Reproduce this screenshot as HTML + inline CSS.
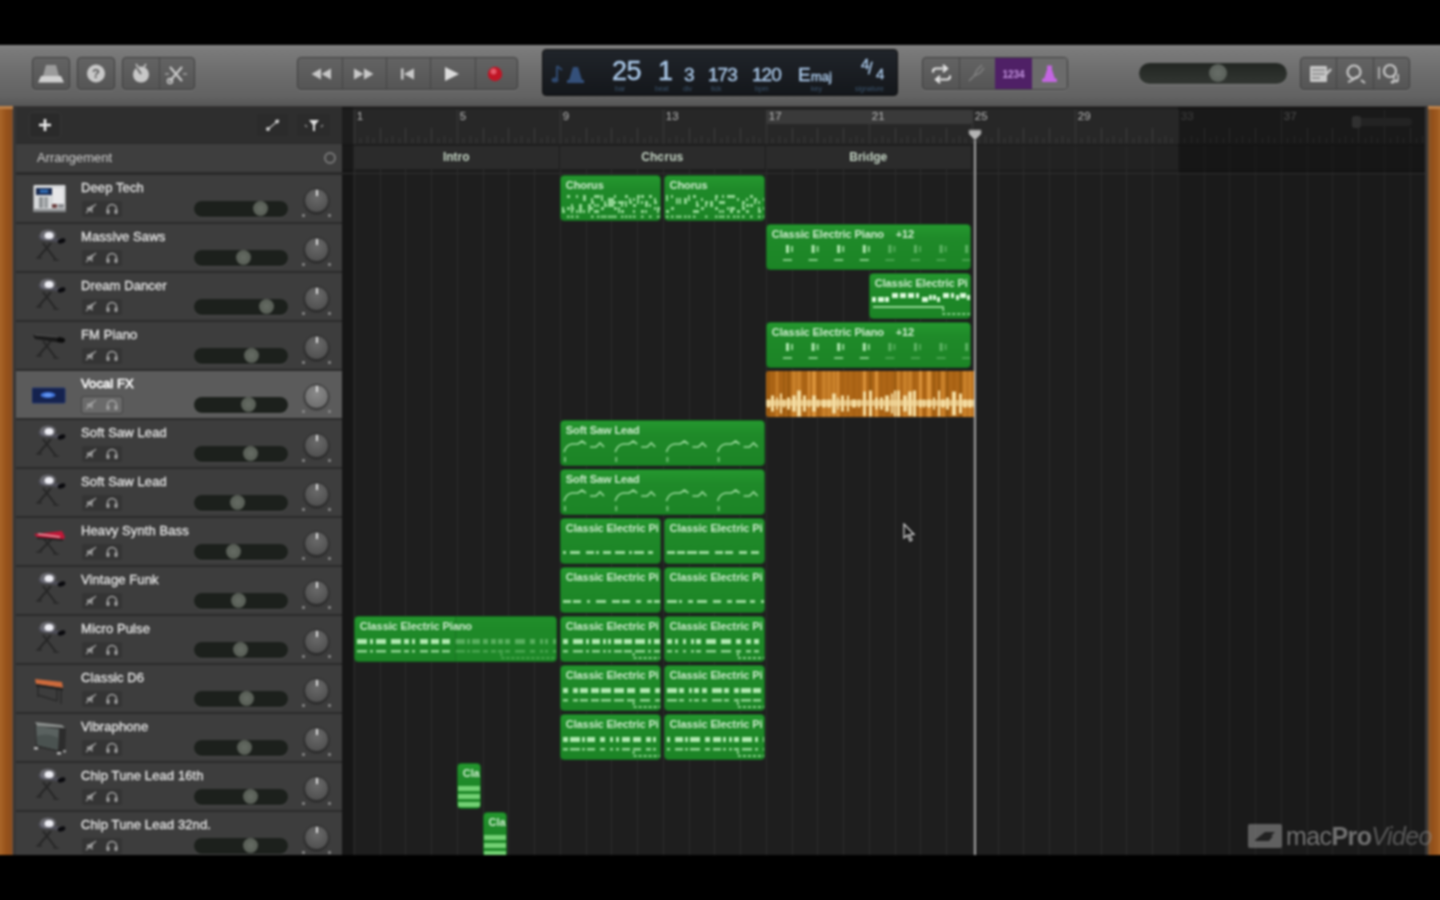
<!DOCTYPE html><html><head><meta charset="utf-8"><title>GarageBand</title><style>
*{box-sizing:border-box;margin:0;padding:0}
html,body{width:1440px;height:900px;overflow:hidden;background:#000}
body{font-family:"Liberation Sans",sans-serif;position:relative;color:#ddd}
#app{position:absolute;left:0;top:0;width:1440px;height:900px;overflow:hidden}#in{position:absolute;left:0;top:0;width:1440px;height:900px;filter:blur(0.9px)}
.abs{position:absolute}
#toolbar{left:-10px;top:45px;width:1460px;height:62px;background:linear-gradient(#8a8a8a,#7c7c7c 4%,#6f6f6f 40%,#626262 85%,#565656);border-bottom:1px solid #222}
.btn{position:absolute;top:12px;height:33px;border-radius:4px;background:linear-gradient(#636363,#555);border:1px solid #3e3e3e;box-shadow:0 1px 0 rgba(255,255,255,.12)}
.btn .dv{position:absolute;top:0;bottom:0;width:1px;background:#444}
.btn svg{position:absolute;top:0}
#lcd{left:552px;top:4px;width:356px;height:47px;border-radius:4px;background:linear-gradient(#20242a,#14171b);border:1px solid #101010;color:#aac8e8}
#lcd span{position:absolute;white-space:nowrap;-webkit-text-stroke:.4px #aac8e8}
#lcd .l{font-size:7px;color:#3d5670;top:35px;-webkit-text-stroke:0}
.wood{background:linear-gradient(90deg,#a86428,#a86428 44%,#97521a 70%,#8c4e1e 92%,#75533a)}.wood i{position:absolute;left:0;top:0;right:0;height:3px;background:#bc8048}
#hdr{left:16px;top:107px;width:326px;height:748px;background:#2a2a2a;overflow:hidden}
#hdrtop{left:0;top:0;width:326px;height:36px;background:#2e2e2e}
#arrh{left:0;top:37px;width:326px;height:28px;background:#3e3e3e;font-size:13px;color:#d0d0d0}
.trk{position:absolute;left:0;width:326px;height:47px;background:#3d3d3d}
.trk.sel{background:#5b5b5b}
.trk .nm{position:absolute;left:65px;top:5px;font-size:13px;color:#e2e2e2;white-space:nowrap;letter-spacing:.1px;-webkit-text-stroke:.35px #e2e2e2}.trk.sel .nm{color:#fff;-webkit-text-stroke:.6px #fff}
.trk .ms{position:absolute;left:66px;top:26px;width:40px;height:16px;background:#343434;border-radius:2px}
.trk.sel .ms{background:#6a6a6a;box-shadow:0 0 0 1px #444}
.trk .sl{position:absolute;left:178px;top:26px;width:94px;height:16px;border-radius:8px;background:#1c201c;box-shadow:0 1px 0 rgba(255,255,255,.08)}
.trk .kn{position:absolute;top:26px;width:15px;height:15px;border-radius:50%;background:radial-gradient(#666c64,#50564e)}
.trk .pan{position:absolute;left:288px;top:13px;width:25px;height:25px;border-radius:50%;background:radial-gradient(circle at 50% 35%,#6a6a6a,#484848);border:1px solid #2c2c2c;box-shadow:0 1px 2px rgba(0,0,0,.5)}
.trk.sel .pan{background:radial-gradient(circle at 50% 35%,#8a8a8a,#666)}
.trk .pan i{position:absolute;left:11px;top:1px;width:2px;height:6px;background:#ddd}.trk .pan:before,.trk .pan:after{content:'';position:absolute;top:25px;width:2.5px;height:2.5px;background:#8a8a8a;border-radius:50%}.trk .pan:before{left:-3px}.trk .pan:after{left:23px}
#tl{left:342px;top:107px;width:1083px;height:748px;background:#1e1e1e;overflow:hidden}
.gl{position:absolute;top:39px;bottom:0;width:1px;background:#2c2c2c}
#ruler{left:0;top:1.5px;width:1083px;height:35px;background:#272727}
#arr{left:0;top:39px;width:1083px;height:23px;background:#222}
.rn{position:absolute;top:1px;font-size:11.5px;color:#bdbdbd}
.tk{position:absolute;width:1px;background:#3e3e3e}
.mk{position:absolute;top:0;height:23px;background:#2b2b2b;border-right:1px solid #1c1c1c;font-size:12px;font-weight:bold;color:#c4d4c4;text-align:center;line-height:23px}
.rg{position:absolute;height:46px;border-radius:4px;background:linear-gradient(#25982f,#1f8a29 30%,#1c8426);overflow:hidden;border:1px solid #156a1e}
.rg b{position:absolute;left:5px;top:3px;font-size:11px;font-weight:bold;color:#cdeccd;white-space:nowrap;letter-spacing:-.1px}
.rg svg{position:absolute;left:0;top:0}
.au{position:absolute;height:46px;background:#b06818;overflow:hidden;border-radius:3px}
</style></head><body><div id="app"><div id="in">
<div id="toolbar" class="abs">
<div class="btn" style="left:42px;width:38px;"><svg style="left:0" width="36" height="31" viewBox="0 0 36 31"><path d="M13 7h10l3 11H10z" fill="#9c9c9c"/><path d="M8 18h20l3 6.500H5z" fill="#d0d0d0"/></svg></div>
<div class="btn" style="left:87px;width:38px;"><svg style="left:0" width="36" height="31" viewBox="0 0 36 31"><circle cx="18" cy="15.500" r="9" fill="#c8c8c8"/><text x="18" y="20" font-size="13" font-weight="bold" text-anchor="middle" fill="#555" font-family="Liberation Sans, sans-serif">?</text></svg></div>
<div class="btn" style="left:132px;width:73px;"><div class="dv" style="left:36px"></div><svg style="left:0" width="72" height="31" viewBox="0 0 72 31"><circle cx="18" cy="16.500" r="8" fill="#c8c8c8"/><path d="M18 16l-4-6" stroke="#666" stroke-width="2"/><path d="M13 6l2 3M23 6l-2 3" stroke="#c8c8c8" stroke-width="1.5"/><path d="M47 9l12 14M59 9L47 23" stroke="#c8c8c8" stroke-width="2.2"/><circle cx="47" cy="23" r="2.500" fill="none" stroke="#c8c8c8" stroke-width="1.5"/><path d="M42 16h4M60 16h4" stroke="#c8c8c8" stroke-width="1.2"/></svg></div>
<div class="btn" style="left:307px;width:221px;"><div class="dv" style="left:44px"></div><div class="dv" style="left:88px"></div><div class="dv" style="left:132px"></div><div class="dv" style="left:177px"></div><svg style="left:0" width="220" height="31" viewBox="0 0 220 31"><path d="M23 10.500v11l-9.500-5.500zM33 10.500v11l-9.500-5.500z" fill="#c8c8c8"/><path d="M56 10.500v11l9.500-5.500zM66 10.500v11l9.500-5.500z" fill="#c8c8c8"/><path d="M103 10.500h2.500v11H103zM116 10.500v11l-10-5.500z" fill="#c8c8c8"/><path d="M147 9v14l14-7z" fill="#dcdcdc"/><circle cx="197" cy="16" r="7.200" fill="#c01626"/><circle cx="195.500" cy="13.500" r="3" fill="#f07080" opacity=".75"/></svg></div>
<div id="lcd" class="abs"><svg class="abs" style="left:8px;top:12px" width="34" height="24" viewBox="0 0 34 24"><path d="M6 4v13M6 4l5 4" stroke="#304a70" stroke-width="2" fill="none"/><ellipse cx="4" cy="18" rx="3.500" ry="2.500" fill="#304a70"/><path d="M18 18l4-13h5l4 13z" fill="#34507a"/><rect x="16" y="18" width="17" height="3" fill="#34507a"/></svg><span style="left:69px;top:6px;font-size:27px;letter-spacing:-.5px">25</span><span style="left:115px;top:6px;font-size:27px;">1</span><span style="left:141px;top:14px;font-size:19px;">3</span><span style="left:165px;top:14px;font-size:19px;letter-spacing:-1px">173</span><span style="left:209px;top:14px;font-size:19px;letter-spacing:-1px">120</span><span style="left:255px;top:14px;font-size:19px;">E</span><span style="left:268px;top:19px;font-size:13px;">maj</span><span style="left:318px;top:5px;font-size:15px;">4</span><span style="left:325px;top:10px;font-size:16px;">/</span><span style="left:333px;top:15px;font-size:15px;">4</span><span class="l" style="left:72px">bar</span><span class="l" style="left:112px">beat</span><span class="l" style="left:140px">div</span><span class="l" style="left:168px">tick</span><span class="l" style="left:212px">bpm</span><span class="l" style="left:268px">key</span><span class="l" style="left:312px">signature</span></div>
<div class="btn" style="left:932px;width:146px;"><div class="dv" style="left:36px"></div><div class="dv" style="left:72px"></div><div class="dv" style="left:109px"></div><div class="abs" style="left:72px;top:0;width:37px;height:31px;background:#4f2066"></div><div class="abs" style="left:109px;top:0;width:35px;height:31px;background:#6b6b6b;border-radius:0 3px 3px 0"></div><svg style="left:0" width="144" height="31" viewBox="0 0 144 31"><path d="M10 14.500v-1q0-3 3-3h10M20 7l4 3.500l-4 3.500M27 17.500v1q0 3-3 3h-10M17 18l-4 3.500l4 3.500" fill="none" stroke="#e4e4e4" stroke-width="2.200"/><path d="M46 23l5-5M51 18l3-6l5-5M51 18l6-3l4-5" stroke="#808080" stroke-width="1.500" fill="none"/><text x="90.500" y="20" font-size="10" font-weight="bold" text-anchor="middle" fill="#c090dc" font-family="Liberation Sans, sans-serif">1234</text><path d="M121 21l3.500-11h4l3.500 11z" fill="#c466e2"/><rect x="119" y="20.500" width="15" height="3.500" rx="1" fill="#c466e2"/><rect x="124" y="7.500" width="5" height="3" fill="#c466e2"/></svg></div>
<div class="abs" style="left:1149px;top:18px;width:148px;height:21px;border-radius:11px;background:linear-gradient(#222622,#323632);box-shadow:0 1px 0 rgba(255,255,255,.15)"></div><div class="abs" style="left:1219px;top:19px;width:18px;height:18px;border-radius:50%;background:radial-gradient(#686e68,#535953)"></div>
<div class="btn" style="left:1310px;width:110px;"><div class="dv" style="left:35px"></div><div class="dv" style="left:72px"></div><svg style="left:0" width="108" height="31" viewBox="0 0 108 31"><rect x="9" y="8" width="17" height="16" rx="1" fill="#c8c8c8"/><path d="M11 12h13M11 16h13M11 20h8" stroke="#666" stroke-width="1.2"/><path d="M22 20l8-9" stroke="#c8c8c8" stroke-width="2.500"/><circle cx="53" cy="14" r="6.500" fill="none" stroke="#c8c8c8" stroke-width="2.2"/><path d="M47 24q6-2 9-6M60 22l4 3" stroke="#c8c8c8" stroke-width="2" fill="none"/><circle cx="89" cy="13" r="6" fill="none" stroke="#c8c8c8" stroke-width="2.200"/><path d="M78 9v12" stroke="#c8c8c8" stroke-width="1.500"/><path d="M93 18v6M97 16v7" stroke="#c8c8c8" stroke-width="1.600"/><ellipse cx="91.500" cy="24" rx="2" ry="1.500" fill="#c8c8c8"/><ellipse cx="95.500" cy="23" rx="2" ry="1.500" fill="#c8c8c8"/></svg></div>
</div>
<div class="abs" style="left:-10px;top:106px;width:1460px;height:749px;background:#383636"></div>
<div class="abs wood" style="left:-10px;top:106px;width:22.5px;height:749px"><i></i></div>
<div class="abs wood" style="left:1427.5px;top:106px;width:22.5px;height:749px;background:linear-gradient(90deg,#7a5430,#94501a 20%,#9c581e 40%,#aa6628 56%,#aa6628)"><i></i></div>
<div id="hdr" class="abs"><div id="hdrtop" class="abs"><div class="abs" style="left:14px;top:6px;width:30px;height:24px;border-radius:3px;background:#2a2a2a;box-shadow:0 0 0 1px rgba(255,255,255,.04)"></div><svg class="abs" style="left:21px;top:10px" width="16" height="16" viewBox="0 0 16 16"><path d="M8 2v12M2 8h12" stroke="#eee" stroke-width="2.600"/></svg><div class="abs" style="left:241px;top:7px;width:31px;height:22px;border-radius:3px;background:#2b2b2b"></div><svg class="abs" style="left:248px;top:10px" width="18" height="16" viewBox="0 0 18 16"><path d="M3 13L15 3" stroke="#bbb" stroke-width="1.3"/><circle cx="4" cy="12" r="2" fill="#ccc"/><circle cx="13" cy="4.500" r="2" fill="#ccc"/></svg><div class="abs" style="left:281px;top:7px;width:33px;height:22px;border-radius:3px;background:#2b2b2b"></div><svg class="abs" style="left:287px;top:10px" width="22" height="16" viewBox="0 0 22 16"><path d="M6 3h10l-4 5v6h-2V8z" fill="#e0e0e0"/><path d="M2 8l2 2M20 8l-2 2" stroke="#999" stroke-width="1.200"/></svg></div>
<div id="arrh" class="abs"><span class="abs" style="left:21px;top:6px">Arrangement</span><span class="abs" style="left:308px;top:8px;width:12px;height:12px;border-radius:50%;border:2.5px solid #777"></span></div>
<div class="trk" style="top:68px"><svg class="abs" style="left:16px;top:0" width="40" height="47" viewBox="0 0 40 47"><rect x="1.500" y="10" width="32" height="27" rx="1" fill="#d6d8da"/><rect x="1.500" y="34" width="32" height="3" fill="#8a8c8e"/><rect x="4" y="13" width="16" height="7" fill="#1c2c50"/><rect x="8" y="14.500" width="8" height="3.500" fill="#2f6ab0"/><rect x="7" y="22" width="4" height="11" fill="#8e9294"/><rect x="12" y="22" width="4" height="11" fill="#9a9ea0"/><rect x="21" y="13" width="10" height="16" fill="#e6e6e8"/><rect x="20" y="29" width="5" height="4" fill="#6a4040"/><rect x="26" y="29" width="6" height="4" fill="#8a8c90"/></svg><span class="nm">Deep Tech</span><div class="ms"><svg class="abs" style="left:0;top:0" width="40" height="16" viewBox="0 0 40 16"><path d="M5 6.5h2.5l3-2.5v8l-3-2.5H5z" fill="#9e9e9e"/><path d="M4 12L14 3" stroke="#9e9e9e" stroke-width="1.3"/><path d="M25.5 10.5V8a4.5 4.5 0 0 1 9 0v2.5" fill="none" stroke="#a4a4a4" stroke-width="1.4"/><rect x="24.5" y="8.5" width="3" height="4.5" rx="1" fill="#a4a4a4"/><rect x="32.500" y="8.500" width="3" height="4.500" rx="1" fill="#a4a4a4"/></svg></div><div class="sl"></div><div class="kn" style="left:237px"></div><div class="pan"><i></i></div></div>
<div class="trk" style="top:117px"><svg class="abs" style="left:16px;top:0" width="40" height="47" viewBox="0 0 40 47"><path d="M11 19L24 36M19 19L6 34" stroke="#262626" stroke-width="2" fill="none"/><path d="M4 34h6M21 36h6" stroke="#2a2a2a" stroke-width="1.5"/><path d="M6 11L30 15L31 19L8 16Z" fill="#4c4c56"/><ellipse cx="16" cy="11" rx="8" ry="5.500" fill="#8c8c98" opacity=".55"/><ellipse cx="17" cy="11.500" rx="4.500" ry="3.500" fill="#ececf2"/><ellipse cx="29.500" cy="17" rx="4" ry="2.300" fill="#0a0a0e" transform="rotate(-18 29.500 17)"/></svg><span class="nm">Massive Saws</span><div class="ms"><svg class="abs" style="left:0;top:0" width="40" height="16" viewBox="0 0 40 16"><path d="M5 6.5h2.5l3-2.5v8l-3-2.5H5z" fill="#9e9e9e"/><path d="M4 12L14 3" stroke="#9e9e9e" stroke-width="1.3"/><path d="M25.5 10.5V8a4.5 4.5 0 0 1 9 0v2.5" fill="none" stroke="#a4a4a4" stroke-width="1.4"/><rect x="24.5" y="8.5" width="3" height="4.5" rx="1" fill="#a4a4a4"/><rect x="32.500" y="8.500" width="3" height="4.500" rx="1" fill="#a4a4a4"/></svg></div><div class="sl"></div><div class="kn" style="left:220px"></div><div class="pan"><i></i></div></div>
<div class="trk" style="top:166px"><svg class="abs" style="left:16px;top:0" width="40" height="47" viewBox="0 0 40 47"><path d="M11 19L24 36M19 19L6 34" stroke="#262626" stroke-width="2" fill="none"/><path d="M4 34h6M21 36h6" stroke="#2a2a2a" stroke-width="1.5"/><path d="M6 11L30 15L31 19L8 16Z" fill="#4c4c56"/><ellipse cx="16" cy="11" rx="8" ry="5.500" fill="#8c8c98" opacity=".55"/><ellipse cx="17" cy="11.500" rx="4.500" ry="3.500" fill="#ececf2"/><ellipse cx="29.500" cy="17" rx="4" ry="2.300" fill="#0a0a0e" transform="rotate(-18 29.500 17)"/></svg><span class="nm">Dream Dancer</span><div class="ms"><svg class="abs" style="left:0;top:0" width="40" height="16" viewBox="0 0 40 16"><path d="M5 6.5h2.5l3-2.5v8l-3-2.5H5z" fill="#9e9e9e"/><path d="M4 12L14 3" stroke="#9e9e9e" stroke-width="1.3"/><path d="M25.5 10.5V8a4.5 4.5 0 0 1 9 0v2.5" fill="none" stroke="#a4a4a4" stroke-width="1.4"/><rect x="24.5" y="8.5" width="3" height="4.5" rx="1" fill="#a4a4a4"/><rect x="32.500" y="8.500" width="3" height="4.500" rx="1" fill="#a4a4a4"/></svg></div><div class="sl"></div><div class="kn" style="left:243px"></div><div class="pan"><i></i></div></div>
<div class="trk" style="top:215px"><svg class="abs" style="left:16px;top:0" width="40" height="47" viewBox="0 0 40 47"><path d="M11 19L24 36M19 19L6 34" stroke="#262626" stroke-width="2" fill="none"/><path d="M4 34h6M21 36h6" stroke="#2a2a2a" stroke-width="1.5"/><path d="M1 13L28 15L33 19L31 21L3 17Z" fill="#1a1a1a"/><path d="M3 13L26 15" stroke="#555" stroke-width="1"/><ellipse cx="29" cy="18" rx="4" ry="2.500" fill="#0c0c0c"/></svg><span class="nm">FM Piano</span><div class="ms"><svg class="abs" style="left:0;top:0" width="40" height="16" viewBox="0 0 40 16"><path d="M5 6.5h2.5l3-2.5v8l-3-2.5H5z" fill="#9e9e9e"/><path d="M4 12L14 3" stroke="#9e9e9e" stroke-width="1.3"/><path d="M25.5 10.5V8a4.5 4.5 0 0 1 9 0v2.5" fill="none" stroke="#a4a4a4" stroke-width="1.4"/><rect x="24.5" y="8.5" width="3" height="4.5" rx="1" fill="#a4a4a4"/><rect x="32.500" y="8.500" width="3" height="4.500" rx="1" fill="#a4a4a4"/></svg></div><div class="sl"></div><div class="kn" style="left:228px"></div><div class="pan"><i></i></div></div>
<div class="trk sel" style="top:264px"><svg class="abs" style="left:16px;top:0" width="40" height="47" viewBox="0 0 40 47"><rect x="0" y="17" width="33" height="15" rx="1" fill="#15224e"/><rect x="0" y="17" width="33" height="15" rx="1" fill="none" stroke="#22346a" stroke-width="1"/><ellipse cx="16" cy="24" rx="7.500" ry="3" fill="#3f72d8"/><ellipse cx="16" cy="24" rx="4" ry="1.500" fill="#6a9af0"/></svg><span class="nm">Vocal FX</span><div class="ms"><svg class="abs" style="left:0;top:0" width="40" height="16" viewBox="0 0 40 16"><path d="M5 6.5h2.5l3-2.5v8l-3-2.5H5z" fill="#9e9e9e"/><path d="M4 12L14 3" stroke="#9e9e9e" stroke-width="1.3"/><path d="M25.5 10.5V8a4.5 4.5 0 0 1 9 0v2.5" fill="none" stroke="#a4a4a4" stroke-width="1.4"/><rect x="24.5" y="8.5" width="3" height="4.5" rx="1" fill="#a4a4a4"/><rect x="32.500" y="8.500" width="3" height="4.500" rx="1" fill="#a4a4a4"/></svg></div><div class="sl"></div><div class="kn" style="left:225px"></div><div class="pan"><i></i></div></div>
<div class="trk" style="top:313px"><svg class="abs" style="left:16px;top:0" width="40" height="47" viewBox="0 0 40 47"><path d="M11 19L24 36M19 19L6 34" stroke="#262626" stroke-width="2" fill="none"/><path d="M4 34h6M21 36h6" stroke="#2a2a2a" stroke-width="1.5"/><path d="M6 11L30 15L31 19L8 16Z" fill="#4c4c56"/><ellipse cx="16" cy="11" rx="8" ry="5.500" fill="#8c8c98" opacity=".55"/><ellipse cx="17" cy="11.500" rx="4.500" ry="3.500" fill="#ececf2"/><ellipse cx="29.500" cy="17" rx="4" ry="2.300" fill="#0a0a0e" transform="rotate(-18 29.500 17)"/></svg><span class="nm">Soft Saw Lead</span><div class="ms"><svg class="abs" style="left:0;top:0" width="40" height="16" viewBox="0 0 40 16"><path d="M5 6.5h2.5l3-2.5v8l-3-2.5H5z" fill="#9e9e9e"/><path d="M4 12L14 3" stroke="#9e9e9e" stroke-width="1.3"/><path d="M25.5 10.5V8a4.5 4.5 0 0 1 9 0v2.5" fill="none" stroke="#a4a4a4" stroke-width="1.4"/><rect x="24.5" y="8.5" width="3" height="4.5" rx="1" fill="#a4a4a4"/><rect x="32.500" y="8.500" width="3" height="4.500" rx="1" fill="#a4a4a4"/></svg></div><div class="sl"></div><div class="kn" style="left:227px"></div><div class="pan"><i></i></div></div>
<div class="trk" style="top:362px"><svg class="abs" style="left:16px;top:0" width="40" height="47" viewBox="0 0 40 47"><path d="M11 19L24 36M19 19L6 34" stroke="#262626" stroke-width="2" fill="none"/><path d="M4 34h6M21 36h6" stroke="#2a2a2a" stroke-width="1.5"/><path d="M6 11L30 15L31 19L8 16Z" fill="#4c4c56"/><ellipse cx="16" cy="11" rx="8" ry="5.500" fill="#8c8c98" opacity=".55"/><ellipse cx="17" cy="11.500" rx="4.500" ry="3.500" fill="#ececf2"/><ellipse cx="29.500" cy="17" rx="4" ry="2.300" fill="#0a0a0e" transform="rotate(-18 29.500 17)"/></svg><span class="nm">Soft Saw Lead</span><div class="ms"><svg class="abs" style="left:0;top:0" width="40" height="16" viewBox="0 0 40 16"><path d="M5 6.5h2.5l3-2.5v8l-3-2.5H5z" fill="#9e9e9e"/><path d="M4 12L14 3" stroke="#9e9e9e" stroke-width="1.3"/><path d="M25.5 10.5V8a4.5 4.5 0 0 1 9 0v2.5" fill="none" stroke="#a4a4a4" stroke-width="1.4"/><rect x="24.5" y="8.5" width="3" height="4.5" rx="1" fill="#a4a4a4"/><rect x="32.500" y="8.500" width="3" height="4.500" rx="1" fill="#a4a4a4"/></svg></div><div class="sl"></div><div class="kn" style="left:214px"></div><div class="pan"><i></i></div></div>
<div class="trk" style="top:411px"><svg class="abs" style="left:16px;top:0" width="40" height="47" viewBox="0 0 40 47"><path d="M12 21L24 36M20 21L7 34" stroke="#262626" stroke-width="2" fill="none"/><path d="M4 34h6M21 36h6" stroke="#2a2a2a" stroke-width="1.500"/><path d="M2 16L30 13L33 19L31 22L6 20Z" fill="#c01838"/><path d="M6 16L28 19" stroke="#e8a0a8" stroke-width="1.500"/><path d="M5 20L31 22" stroke="#222" stroke-width="2"/></svg><span class="nm">Heavy Synth Bass</span><div class="ms"><svg class="abs" style="left:0;top:0" width="40" height="16" viewBox="0 0 40 16"><path d="M5 6.5h2.5l3-2.5v8l-3-2.5H5z" fill="#9e9e9e"/><path d="M4 12L14 3" stroke="#9e9e9e" stroke-width="1.3"/><path d="M25.5 10.5V8a4.5 4.5 0 0 1 9 0v2.5" fill="none" stroke="#a4a4a4" stroke-width="1.4"/><rect x="24.5" y="8.5" width="3" height="4.5" rx="1" fill="#a4a4a4"/><rect x="32.500" y="8.500" width="3" height="4.500" rx="1" fill="#a4a4a4"/></svg></div><div class="sl"></div><div class="kn" style="left:210px"></div><div class="pan"><i></i></div></div>
<div class="trk" style="top:460px"><svg class="abs" style="left:16px;top:0" width="40" height="47" viewBox="0 0 40 47"><path d="M11 19L24 36M19 19L6 34" stroke="#262626" stroke-width="2" fill="none"/><path d="M4 34h6M21 36h6" stroke="#2a2a2a" stroke-width="1.5"/><path d="M6 11L30 15L31 19L8 16Z" fill="#4c4c56"/><ellipse cx="16" cy="11" rx="8" ry="5.500" fill="#8c8c98" opacity=".55"/><ellipse cx="17" cy="11.500" rx="4.500" ry="3.500" fill="#ececf2"/><ellipse cx="29.500" cy="17" rx="4" ry="2.300" fill="#0a0a0e" transform="rotate(-18 29.500 17)"/></svg><span class="nm">Vintage Funk</span><div class="ms"><svg class="abs" style="left:0;top:0" width="40" height="16" viewBox="0 0 40 16"><path d="M5 6.5h2.5l3-2.5v8l-3-2.5H5z" fill="#9e9e9e"/><path d="M4 12L14 3" stroke="#9e9e9e" stroke-width="1.3"/><path d="M25.5 10.5V8a4.5 4.5 0 0 1 9 0v2.5" fill="none" stroke="#a4a4a4" stroke-width="1.4"/><rect x="24.5" y="8.5" width="3" height="4.5" rx="1" fill="#a4a4a4"/><rect x="32.500" y="8.500" width="3" height="4.500" rx="1" fill="#a4a4a4"/></svg></div><div class="sl"></div><div class="kn" style="left:215px"></div><div class="pan"><i></i></div></div>
<div class="trk" style="top:509px"><svg class="abs" style="left:16px;top:0" width="40" height="47" viewBox="0 0 40 47"><path d="M11 19L24 36M19 19L6 34" stroke="#262626" stroke-width="2" fill="none"/><path d="M4 34h6M21 36h6" stroke="#2a2a2a" stroke-width="1.5"/><path d="M6 11L30 15L31 19L8 16Z" fill="#4c4c56"/><ellipse cx="16" cy="11" rx="8" ry="5.500" fill="#8c8c98" opacity=".55"/><ellipse cx="17" cy="11.500" rx="4.500" ry="3.500" fill="#ececf2"/><ellipse cx="29.500" cy="17" rx="4" ry="2.300" fill="#0a0a0e" transform="rotate(-18 29.500 17)"/></svg><span class="nm">Micro Pulse</span><div class="ms"><svg class="abs" style="left:0;top:0" width="40" height="16" viewBox="0 0 40 16"><path d="M5 6.5h2.5l3-2.5v8l-3-2.5H5z" fill="#9e9e9e"/><path d="M4 12L14 3" stroke="#9e9e9e" stroke-width="1.3"/><path d="M25.5 10.5V8a4.5 4.5 0 0 1 9 0v2.5" fill="none" stroke="#a4a4a4" stroke-width="1.4"/><rect x="24.5" y="8.5" width="3" height="4.5" rx="1" fill="#a4a4a4"/><rect x="32.500" y="8.500" width="3" height="4.500" rx="1" fill="#a4a4a4"/></svg></div><div class="sl"></div><div class="kn" style="left:217px"></div><div class="pan"><i></i></div></div>
<div class="trk" style="top:558px"><svg class="abs" style="left:16px;top:0" width="40" height="47" viewBox="0 0 40 47"><path d="M6 20V32M29 24V39M25 24V36M6 30L25 36" stroke="#2a2a2a" stroke-width="1.600" fill="none"/><path d="M3 14L30 17L31 23L4 19Z" fill="#cc6a3c"/><path d="M4 19L31 23L31 25.500L4 21.500Z" fill="#222"/></svg><span class="nm">Classic D6</span><div class="ms"><svg class="abs" style="left:0;top:0" width="40" height="16" viewBox="0 0 40 16"><path d="M5 6.5h2.5l3-2.5v8l-3-2.5H5z" fill="#9e9e9e"/><path d="M4 12L14 3" stroke="#9e9e9e" stroke-width="1.3"/><path d="M25.5 10.5V8a4.5 4.5 0 0 1 9 0v2.5" fill="none" stroke="#a4a4a4" stroke-width="1.4"/><rect x="24.5" y="8.5" width="3" height="4.5" rx="1" fill="#a4a4a4"/><rect x="32.500" y="8.500" width="3" height="4.500" rx="1" fill="#a4a4a4"/></svg></div><div class="sl"></div><div class="kn" style="left:223px"></div><div class="pan"><i></i></div></div>
<div class="trk" style="top:607px"><svg class="abs" style="left:16px;top:0" width="40" height="47" viewBox="0 0 40 47"><path d="M3 8L30 11L34 15L33 38L27 38L4 33Z" fill="#2c2c2c"/><path d="M4 12L27 15L26 36L5 31Z" fill="#5a6260"/><path d="M3 8L30 11L33 14L5 12Z" fill="#8a8e8c"/><path d="M5 22Q16 18 26 24L26 36L5 31Z" fill="#4a5250"/><rect x="2" y="33" width="4" height="2.500" fill="#bbb"/><rect x="25" y="38" width="4" height="2.500" fill="#bbb"/><rect x="31" y="36" width="3" height="2.500" fill="#999"/></svg><span class="nm">Vibraphone</span><div class="ms"><svg class="abs" style="left:0;top:0" width="40" height="16" viewBox="0 0 40 16"><path d="M5 6.5h2.5l3-2.5v8l-3-2.5H5z" fill="#9e9e9e"/><path d="M4 12L14 3" stroke="#9e9e9e" stroke-width="1.3"/><path d="M25.5 10.5V8a4.5 4.5 0 0 1 9 0v2.5" fill="none" stroke="#a4a4a4" stroke-width="1.4"/><rect x="24.5" y="8.5" width="3" height="4.5" rx="1" fill="#a4a4a4"/><rect x="32.500" y="8.500" width="3" height="4.500" rx="1" fill="#a4a4a4"/></svg></div><div class="sl"></div><div class="kn" style="left:221px"></div><div class="pan"><i></i></div></div>
<div class="trk" style="top:656px"><svg class="abs" style="left:16px;top:0" width="40" height="47" viewBox="0 0 40 47"><path d="M11 19L24 36M19 19L6 34" stroke="#262626" stroke-width="2" fill="none"/><path d="M4 34h6M21 36h6" stroke="#2a2a2a" stroke-width="1.5"/><path d="M6 11L30 15L31 19L8 16Z" fill="#4c4c56"/><ellipse cx="16" cy="11" rx="8" ry="5.500" fill="#8c8c98" opacity=".55"/><ellipse cx="17" cy="11.500" rx="4.500" ry="3.500" fill="#ececf2"/><ellipse cx="29.500" cy="17" rx="4" ry="2.300" fill="#0a0a0e" transform="rotate(-18 29.500 17)"/></svg><span class="nm">Chip Tune Lead 16th</span><div class="ms"><svg class="abs" style="left:0;top:0" width="40" height="16" viewBox="0 0 40 16"><path d="M5 6.5h2.5l3-2.5v8l-3-2.5H5z" fill="#9e9e9e"/><path d="M4 12L14 3" stroke="#9e9e9e" stroke-width="1.3"/><path d="M25.5 10.5V8a4.5 4.5 0 0 1 9 0v2.5" fill="none" stroke="#a4a4a4" stroke-width="1.4"/><rect x="24.5" y="8.5" width="3" height="4.5" rx="1" fill="#a4a4a4"/><rect x="32.500" y="8.500" width="3" height="4.500" rx="1" fill="#a4a4a4"/></svg></div><div class="sl"></div><div class="kn" style="left:227px"></div><div class="pan"><i></i></div></div>
<div class="trk" style="top:705px"><svg class="abs" style="left:16px;top:0" width="40" height="47" viewBox="0 0 40 47"><path d="M11 19L24 36M19 19L6 34" stroke="#262626" stroke-width="2" fill="none"/><path d="M4 34h6M21 36h6" stroke="#2a2a2a" stroke-width="1.5"/><path d="M6 11L30 15L31 19L8 16Z" fill="#4c4c56"/><ellipse cx="16" cy="11" rx="8" ry="5.500" fill="#8c8c98" opacity=".55"/><ellipse cx="17" cy="11.500" rx="4.500" ry="3.500" fill="#ececf2"/><ellipse cx="29.500" cy="17" rx="4" ry="2.300" fill="#0a0a0e" transform="rotate(-18 29.500 17)"/></svg><span class="nm">Chip Tune Lead 32nd.</span><div class="ms"><svg class="abs" style="left:0;top:0" width="40" height="16" viewBox="0 0 40 16"><path d="M5 6.5h2.5l3-2.5v8l-3-2.5H5z" fill="#9e9e9e"/><path d="M4 12L14 3" stroke="#9e9e9e" stroke-width="1.3"/><path d="M25.5 10.5V8a4.5 4.5 0 0 1 9 0v2.5" fill="none" stroke="#a4a4a4" stroke-width="1.4"/><rect x="24.5" y="8.5" width="3" height="4.5" rx="1" fill="#a4a4a4"/><rect x="32.500" y="8.500" width="3" height="4.500" rx="1" fill="#a4a4a4"/></svg></div><div class="sl"></div><div class="kn" style="left:227px"></div><div class="pan"><i></i></div></div>
</div>
<div id="tl" class="abs">
<div id="ruler" class="abs"><div class="abs" style="left:423.8px;top:1px;width:206.0px;height:14px;background:#3a3a3a;border-radius:2px"></div>
<div class="tk" style="left:11.8px;top:1px;height:34px;background:#3a3a3a"></div><span class="rn" style="left:14.8px;opacity:1">1</span>
<div class="tk" style="left:18.2px;top:29px;height:5px;background:#3a3a3a"></div>
<div class="tk" style="left:24.7px;top:27px;height:7px;background:#3a3a3a"></div>
<div class="tk" style="left:31.1px;top:29px;height:5px;background:#3a3a3a"></div>
<div class="tk" style="left:37.6px;top:19px;height:15px"></div>
<div class="tk" style="left:44.0px;top:29px;height:5px;background:#3a3a3a"></div>
<div class="tk" style="left:50.4px;top:27px;height:7px;background:#3a3a3a"></div>
<div class="tk" style="left:56.9px;top:29px;height:5px;background:#3a3a3a"></div>
<div class="tk" style="left:63.3px;top:19px;height:15px"></div>
<div class="tk" style="left:69.7px;top:29px;height:5px;background:#3a3a3a"></div>
<div class="tk" style="left:76.2px;top:27px;height:7px;background:#3a3a3a"></div>
<div class="tk" style="left:82.6px;top:29px;height:5px;background:#3a3a3a"></div>
<div class="tk" style="left:89.1px;top:19px;height:15px"></div>
<div class="tk" style="left:95.5px;top:29px;height:5px;background:#3a3a3a"></div>
<div class="tk" style="left:101.9px;top:27px;height:7px;background:#3a3a3a"></div>
<div class="tk" style="left:108.4px;top:29px;height:5px;background:#3a3a3a"></div>
<div class="tk" style="left:114.8px;top:1px;height:34px;background:#3a3a3a"></div><span class="rn" style="left:117.8px;opacity:1">5</span>
<div class="tk" style="left:121.2px;top:29px;height:5px;background:#3a3a3a"></div>
<div class="tk" style="left:127.7px;top:27px;height:7px;background:#3a3a3a"></div>
<div class="tk" style="left:134.1px;top:29px;height:5px;background:#3a3a3a"></div>
<div class="tk" style="left:140.6px;top:19px;height:15px"></div>
<div class="tk" style="left:147.0px;top:29px;height:5px;background:#3a3a3a"></div>
<div class="tk" style="left:153.4px;top:27px;height:7px;background:#3a3a3a"></div>
<div class="tk" style="left:159.9px;top:29px;height:5px;background:#3a3a3a"></div>
<div class="tk" style="left:166.3px;top:19px;height:15px"></div>
<div class="tk" style="left:172.7px;top:29px;height:5px;background:#3a3a3a"></div>
<div class="tk" style="left:179.2px;top:27px;height:7px;background:#3a3a3a"></div>
<div class="tk" style="left:185.6px;top:29px;height:5px;background:#3a3a3a"></div>
<div class="tk" style="left:192.0px;top:19px;height:15px"></div>
<div class="tk" style="left:198.5px;top:29px;height:5px;background:#3a3a3a"></div>
<div class="tk" style="left:204.9px;top:27px;height:7px;background:#3a3a3a"></div>
<div class="tk" style="left:211.4px;top:29px;height:5px;background:#3a3a3a"></div>
<div class="tk" style="left:217.8px;top:1px;height:34px;background:#3a3a3a"></div><span class="rn" style="left:220.8px;opacity:1">9</span>
<div class="tk" style="left:224.2px;top:29px;height:5px;background:#3a3a3a"></div>
<div class="tk" style="left:230.7px;top:27px;height:7px;background:#3a3a3a"></div>
<div class="tk" style="left:237.1px;top:29px;height:5px;background:#3a3a3a"></div>
<div class="tk" style="left:243.5px;top:19px;height:15px"></div>
<div class="tk" style="left:250.0px;top:29px;height:5px;background:#3a3a3a"></div>
<div class="tk" style="left:256.4px;top:27px;height:7px;background:#3a3a3a"></div>
<div class="tk" style="left:262.9px;top:29px;height:5px;background:#3a3a3a"></div>
<div class="tk" style="left:269.3px;top:19px;height:15px"></div>
<div class="tk" style="left:275.7px;top:29px;height:5px;background:#3a3a3a"></div>
<div class="tk" style="left:282.2px;top:27px;height:7px;background:#3a3a3a"></div>
<div class="tk" style="left:288.6px;top:29px;height:5px;background:#3a3a3a"></div>
<div class="tk" style="left:295.0px;top:19px;height:15px"></div>
<div class="tk" style="left:301.5px;top:29px;height:5px;background:#3a3a3a"></div>
<div class="tk" style="left:307.9px;top:27px;height:7px;background:#3a3a3a"></div>
<div class="tk" style="left:314.4px;top:29px;height:5px;background:#3a3a3a"></div>
<div class="tk" style="left:320.8px;top:1px;height:34px;background:#3a3a3a"></div><span class="rn" style="left:323.8px;opacity:1">13</span>
<div class="tk" style="left:327.2px;top:29px;height:5px;background:#3a3a3a"></div>
<div class="tk" style="left:333.7px;top:27px;height:7px;background:#3a3a3a"></div>
<div class="tk" style="left:340.1px;top:29px;height:5px;background:#3a3a3a"></div>
<div class="tk" style="left:346.5px;top:19px;height:15px"></div>
<div class="tk" style="left:353.0px;top:29px;height:5px;background:#3a3a3a"></div>
<div class="tk" style="left:359.4px;top:27px;height:7px;background:#3a3a3a"></div>
<div class="tk" style="left:365.9px;top:29px;height:5px;background:#3a3a3a"></div>
<div class="tk" style="left:372.3px;top:19px;height:15px"></div>
<div class="tk" style="left:378.7px;top:29px;height:5px;background:#3a3a3a"></div>
<div class="tk" style="left:385.2px;top:27px;height:7px;background:#3a3a3a"></div>
<div class="tk" style="left:391.6px;top:29px;height:5px;background:#3a3a3a"></div>
<div class="tk" style="left:398.0px;top:19px;height:15px"></div>
<div class="tk" style="left:404.5px;top:29px;height:5px;background:#3a3a3a"></div>
<div class="tk" style="left:410.9px;top:27px;height:7px;background:#3a3a3a"></div>
<div class="tk" style="left:417.4px;top:29px;height:5px;background:#3a3a3a"></div>
<div class="tk" style="left:423.8px;top:1px;height:34px;background:#3a3a3a"></div><span class="rn" style="left:426.8px;opacity:1">17</span>
<div class="tk" style="left:430.2px;top:29px;height:5px;background:#3a3a3a"></div>
<div class="tk" style="left:436.7px;top:27px;height:7px;background:#3a3a3a"></div>
<div class="tk" style="left:443.1px;top:29px;height:5px;background:#3a3a3a"></div>
<div class="tk" style="left:449.5px;top:19px;height:15px"></div>
<div class="tk" style="left:456.0px;top:29px;height:5px;background:#3a3a3a"></div>
<div class="tk" style="left:462.4px;top:27px;height:7px;background:#3a3a3a"></div>
<div class="tk" style="left:468.9px;top:29px;height:5px;background:#3a3a3a"></div>
<div class="tk" style="left:475.3px;top:19px;height:15px"></div>
<div class="tk" style="left:481.7px;top:29px;height:5px;background:#3a3a3a"></div>
<div class="tk" style="left:488.2px;top:27px;height:7px;background:#3a3a3a"></div>
<div class="tk" style="left:494.6px;top:29px;height:5px;background:#3a3a3a"></div>
<div class="tk" style="left:501.0px;top:19px;height:15px"></div>
<div class="tk" style="left:507.5px;top:29px;height:5px;background:#3a3a3a"></div>
<div class="tk" style="left:513.9px;top:27px;height:7px;background:#3a3a3a"></div>
<div class="tk" style="left:520.4px;top:29px;height:5px;background:#3a3a3a"></div>
<div class="tk" style="left:526.8px;top:1px;height:34px;background:#3a3a3a"></div><span class="rn" style="left:529.8px;opacity:1">21</span>
<div class="tk" style="left:533.2px;top:29px;height:5px;background:#3a3a3a"></div>
<div class="tk" style="left:539.7px;top:27px;height:7px;background:#3a3a3a"></div>
<div class="tk" style="left:546.1px;top:29px;height:5px;background:#3a3a3a"></div>
<div class="tk" style="left:552.5px;top:19px;height:15px"></div>
<div class="tk" style="left:559.0px;top:29px;height:5px;background:#3a3a3a"></div>
<div class="tk" style="left:565.4px;top:27px;height:7px;background:#3a3a3a"></div>
<div class="tk" style="left:571.9px;top:29px;height:5px;background:#3a3a3a"></div>
<div class="tk" style="left:578.3px;top:19px;height:15px"></div>
<div class="tk" style="left:584.7px;top:29px;height:5px;background:#3a3a3a"></div>
<div class="tk" style="left:591.2px;top:27px;height:7px;background:#3a3a3a"></div>
<div class="tk" style="left:597.6px;top:29px;height:5px;background:#3a3a3a"></div>
<div class="tk" style="left:604.0px;top:19px;height:15px"></div>
<div class="tk" style="left:610.5px;top:29px;height:5px;background:#3a3a3a"></div>
<div class="tk" style="left:616.9px;top:27px;height:7px;background:#3a3a3a"></div>
<div class="tk" style="left:623.4px;top:29px;height:5px;background:#3a3a3a"></div>
<div class="tk" style="left:629.8px;top:1px;height:34px;background:#3a3a3a"></div><span class="rn" style="left:632.8px;opacity:1">25</span>
<div class="tk" style="left:636.2px;top:29px;height:5px;background:#3a3a3a"></div>
<div class="tk" style="left:642.7px;top:27px;height:7px;background:#3a3a3a"></div>
<div class="tk" style="left:649.1px;top:29px;height:5px;background:#3a3a3a"></div>
<div class="tk" style="left:655.5px;top:19px;height:15px"></div>
<div class="tk" style="left:662.0px;top:29px;height:5px;background:#3a3a3a"></div>
<div class="tk" style="left:668.4px;top:27px;height:7px;background:#3a3a3a"></div>
<div class="tk" style="left:674.9px;top:29px;height:5px;background:#3a3a3a"></div>
<div class="tk" style="left:681.3px;top:19px;height:15px"></div>
<div class="tk" style="left:687.7px;top:29px;height:5px;background:#3a3a3a"></div>
<div class="tk" style="left:694.2px;top:27px;height:7px;background:#3a3a3a"></div>
<div class="tk" style="left:700.6px;top:29px;height:5px;background:#3a3a3a"></div>
<div class="tk" style="left:707.0px;top:19px;height:15px"></div>
<div class="tk" style="left:713.5px;top:29px;height:5px;background:#3a3a3a"></div>
<div class="tk" style="left:719.9px;top:27px;height:7px;background:#3a3a3a"></div>
<div class="tk" style="left:726.4px;top:29px;height:5px;background:#3a3a3a"></div>
<div class="tk" style="left:732.8px;top:1px;height:34px;background:#3a3a3a"></div><span class="rn" style="left:735.8px;opacity:1">29</span>
<div class="tk" style="left:739.2px;top:29px;height:5px;background:#3a3a3a"></div>
<div class="tk" style="left:745.7px;top:27px;height:7px;background:#3a3a3a"></div>
<div class="tk" style="left:752.1px;top:29px;height:5px;background:#3a3a3a"></div>
<div class="tk" style="left:758.5px;top:19px;height:15px"></div>
<div class="tk" style="left:765.0px;top:29px;height:5px;background:#3a3a3a"></div>
<div class="tk" style="left:771.4px;top:27px;height:7px;background:#3a3a3a"></div>
<div class="tk" style="left:777.9px;top:29px;height:5px;background:#3a3a3a"></div>
<div class="tk" style="left:784.3px;top:19px;height:15px"></div>
<div class="tk" style="left:790.7px;top:29px;height:5px;background:#3a3a3a"></div>
<div class="tk" style="left:797.2px;top:27px;height:7px;background:#3a3a3a"></div>
<div class="tk" style="left:803.6px;top:29px;height:5px;background:#3a3a3a"></div>
<div class="tk" style="left:810.0px;top:19px;height:15px"></div>
<div class="tk" style="left:816.5px;top:29px;height:5px;background:#3a3a3a"></div>
<div class="tk" style="left:822.9px;top:27px;height:7px;background:#3a3a3a"></div>
<div class="tk" style="left:829.4px;top:29px;height:5px;background:#3a3a3a"></div>
<div class="tk" style="left:835.8px;top:1px;height:34px;background:#3a3a3a"></div><span class="rn" style="left:838.8px;opacity:0.35">33</span>
<div class="tk" style="left:842.2px;top:29px;height:5px;background:#3a3a3a"></div>
<div class="tk" style="left:848.7px;top:27px;height:7px;background:#3a3a3a"></div>
<div class="tk" style="left:855.1px;top:29px;height:5px;background:#3a3a3a"></div>
<div class="tk" style="left:861.5px;top:19px;height:15px"></div>
<div class="tk" style="left:868.0px;top:29px;height:5px;background:#3a3a3a"></div>
<div class="tk" style="left:874.4px;top:27px;height:7px;background:#3a3a3a"></div>
<div class="tk" style="left:880.9px;top:29px;height:5px;background:#3a3a3a"></div>
<div class="tk" style="left:887.3px;top:19px;height:15px"></div>
<div class="tk" style="left:893.7px;top:29px;height:5px;background:#3a3a3a"></div>
<div class="tk" style="left:900.2px;top:27px;height:7px;background:#3a3a3a"></div>
<div class="tk" style="left:906.6px;top:29px;height:5px;background:#3a3a3a"></div>
<div class="tk" style="left:913.0px;top:19px;height:15px"></div>
<div class="tk" style="left:919.5px;top:29px;height:5px;background:#3a3a3a"></div>
<div class="tk" style="left:925.9px;top:27px;height:7px;background:#3a3a3a"></div>
<div class="tk" style="left:932.4px;top:29px;height:5px;background:#3a3a3a"></div>
<div class="tk" style="left:938.8px;top:1px;height:34px;background:#3a3a3a"></div><span class="rn" style="left:941.8px;opacity:0.5">37</span>
<div class="tk" style="left:945.2px;top:29px;height:5px;background:#3a3a3a"></div>
<div class="tk" style="left:951.7px;top:27px;height:7px;background:#3a3a3a"></div>
<div class="tk" style="left:958.1px;top:29px;height:5px;background:#3a3a3a"></div>
<div class="tk" style="left:964.5px;top:19px;height:15px"></div>
<div class="tk" style="left:971.0px;top:29px;height:5px;background:#3a3a3a"></div>
<div class="tk" style="left:977.4px;top:27px;height:7px;background:#3a3a3a"></div>
<div class="tk" style="left:983.9px;top:29px;height:5px;background:#3a3a3a"></div>
<div class="tk" style="left:990.3px;top:19px;height:15px"></div>
<div class="tk" style="left:996.7px;top:29px;height:5px;background:#3a3a3a"></div>
<div class="tk" style="left:1003.2px;top:27px;height:7px;background:#3a3a3a"></div>
<div class="tk" style="left:1009.6px;top:29px;height:5px;background:#3a3a3a"></div>
<div class="tk" style="left:1016.0px;top:19px;height:15px"></div>
<div class="tk" style="left:1022.5px;top:29px;height:5px;background:#3a3a3a"></div>
<div class="tk" style="left:1028.9px;top:27px;height:7px;background:#3a3a3a"></div>
<div class="tk" style="left:1035.4px;top:29px;height:5px;background:#3a3a3a"></div>
<div class="tk" style="left:1041.8px;top:1px;height:34px;background:#3a3a3a"></div><span class="rn" style="left:1044.8px;opacity:0">41</span>
<div class="tk" style="left:1048.2px;top:29px;height:5px;background:#3a3a3a"></div>
<div class="tk" style="left:1054.7px;top:27px;height:7px;background:#3a3a3a"></div>
<div class="tk" style="left:1061.1px;top:29px;height:5px;background:#3a3a3a"></div>
<div class="tk" style="left:1067.5px;top:19px;height:15px"></div>
<div class="tk" style="left:1074.0px;top:29px;height:5px;background:#3a3a3a"></div>
<div class="tk" style="left:1080.4px;top:27px;height:7px;background:#3a3a3a"></div>
<div class="tk" style="left:1086.9px;top:29px;height:5px;background:#3a3a3a"></div>
<div class="abs" style="left:1012px;top:9px;width:58px;height:8px;border-radius:4px;background:#343434"></div><div class="abs" style="left:1010px;top:7px;width:9px;height:12px;border-radius:3px;background:#484848"></div></div><div id="arr" class="abs"><div class="mk" style="left:11.8px;width:206.0px">Intro</div>
<div class="mk" style="left:217.8px;width:206.0px">Chorus</div>
<div class="mk" style="left:423.8px;width:206.0px">Bridge</div></div>
<div class="gl" style="left:11.8px"></div>
<div class="gl" style="left:37.6px"></div>
<div class="gl" style="left:63.3px"></div>
<div class="gl" style="left:89.1px"></div>
<div class="gl" style="left:114.8px"></div>
<div class="gl" style="left:140.6px"></div>
<div class="gl" style="left:166.3px"></div>
<div class="gl" style="left:192.0px"></div>
<div class="gl" style="left:217.8px"></div>
<div class="gl" style="left:243.5px"></div>
<div class="gl" style="left:269.3px"></div>
<div class="gl" style="left:295.0px"></div>
<div class="gl" style="left:320.8px"></div>
<div class="gl" style="left:346.5px"></div>
<div class="gl" style="left:372.3px"></div>
<div class="gl" style="left:398.0px"></div>
<div class="gl" style="left:423.8px"></div>
<div class="gl" style="left:449.5px"></div>
<div class="gl" style="left:475.3px"></div>
<div class="gl" style="left:501.0px"></div>
<div class="gl" style="left:526.8px"></div>
<div class="gl" style="left:552.5px"></div>
<div class="gl" style="left:578.3px"></div>
<div class="gl" style="left:604.0px"></div>
<div class="gl" style="left:629.8px"></div>
<div class="gl" style="left:655.5px"></div>
<div class="gl" style="left:681.3px"></div>
<div class="gl" style="left:707.0px"></div>
<div class="gl" style="left:732.8px"></div>
<div class="gl" style="left:758.5px"></div>
<div class="gl" style="left:784.3px"></div>
<div class="gl" style="left:810.0px"></div>
<div class="gl" style="left:835.8px"></div>
<div class="gl" style="left:861.5px"></div>
<div class="gl" style="left:887.3px"></div>
<div class="gl" style="left:913.0px"></div>
<div class="gl" style="left:938.8px"></div>
<div class="gl" style="left:964.5px"></div>
<div class="gl" style="left:990.3px"></div>
<div class="gl" style="left:1016.0px"></div>
<div class="gl" style="left:1041.8px"></div>
<div class="gl" style="left:1067.5px"></div>
<div class="abs" style="left:835.8px;top:0;width:300px;height:748px;background:rgba(0,0,0,.13)"></div>
<div class="abs" style="left:835.8px;top:0;width:300px;height:66px;background:rgba(0,0,0,.22)"></div>
<div class="abs" style="left:0;top:0;width:11px;height:748px;background:rgba(0,0,0,.25)"></div>
<div class="abs" style="left:0;top:66px;width:1083px;height:1px;background:#303030"></div><div class="rg" style="left:217.8px;top:68px;width:100.8px;"><svg width="101" height="46" viewBox="0 0 101 46"><rect x="1.0" y="31" width="2" height="3" fill="#aee8ae" opacity=".8"/><rect x="1.0" y="34" width="3" height="3" fill="#aee8ae" opacity=".8"/><rect x="6.0" y="31" width="3" height="3" fill="#aee8ae" opacity=".8"/><rect x="6.0" y="19" width="3" height="3" fill="#aee8ae" opacity=".8"/><rect x="6.0" y="39.500" width="2.500" height="2.500" fill="#aee8ae" opacity=".75"/><rect x="10.0" y="31" width="3" height="3" fill="#aee8ae" opacity=".8"/><rect x="10.0" y="34" width="2" height="3" fill="#aee8ae" opacity=".8"/><rect x="10.0" y="28" width="2" height="3" fill="#aee8ae" opacity=".8"/><rect x="10.0" y="39.500" width="2.500" height="2.500" fill="#aee8ae" opacity=".75"/><rect x="15.0" y="34" width="2" height="3" fill="#aee8ae" opacity=".8"/><rect x="15.0" y="19" width="2" height="3" fill="#aee8ae" opacity=".8"/><rect x="15.0" y="39.500" width="2.500" height="2.500" fill="#aee8ae" opacity=".75"/><rect x="18.0" y="28" width="3" height="3" fill="#aee8ae" opacity=".8"/><rect x="18.0" y="31" width="3" height="3" fill="#aee8ae" opacity=".8"/><rect x="18.0" y="34" width="3" height="3" fill="#aee8ae" opacity=".8"/><rect x="22.0" y="19" width="3" height="3" fill="#aee8ae" opacity=".8"/><rect x="22.0" y="34" width="2" height="3" fill="#aee8ae" opacity=".8"/><rect x="22.0" y="22" width="3" height="3" fill="#aee8ae" opacity=".8"/><rect x="27.0" y="28" width="3" height="3" fill="#aee8ae" opacity=".8"/><rect x="27.0" y="31" width="3" height="3" fill="#aee8ae" opacity=".8"/><rect x="27.0" y="34" width="2" height="3" fill="#aee8ae" opacity=".8"/><rect x="30.0" y="31" width="2" height="3" fill="#aee8ae" opacity=".8"/><rect x="30.0" y="22" width="2" height="3" fill="#aee8ae" opacity=".8"/><rect x="30.0" y="25" width="3" height="3" fill="#aee8ae" opacity=".8"/><rect x="30.0" y="39.500" width="2.500" height="2.500" fill="#aee8ae" opacity=".75"/><rect x="33.0" y="34" width="3" height="3" fill="#aee8ae" opacity=".8"/><rect x="33.0" y="28" width="2" height="3" fill="#aee8ae" opacity=".8"/><rect x="33.0" y="19" width="3" height="3" fill="#aee8ae" opacity=".8"/><rect x="36.0" y="28" width="2" height="3" fill="#aee8ae" opacity=".8"/><rect x="36.0" y="34" width="2" height="3" fill="#aee8ae" opacity=".8"/><rect x="36.0" y="19" width="3" height="3" fill="#aee8ae" opacity=".8"/><rect x="36.0" y="39.500" width="2.500" height="2.500" fill="#aee8ae" opacity=".75"/><rect x="40.0" y="31" width="3" height="3" fill="#aee8ae" opacity=".8"/><rect x="40.0" y="22" width="2" height="3" fill="#aee8ae" opacity=".8"/><rect x="40.0" y="19" width="2" height="3" fill="#aee8ae" opacity=".8"/><rect x="40.0" y="39.500" width="2.500" height="2.500" fill="#aee8ae" opacity=".75"/><rect x="43.0" y="28" width="3" height="3" fill="#aee8ae" opacity=".8"/><rect x="43.0" y="25" width="2" height="3" fill="#aee8ae" opacity=".8"/><rect x="43.0" y="39.500" width="2.500" height="2.500" fill="#aee8ae" opacity=".75"/><rect x="47.0" y="25" width="3" height="3" fill="#aee8ae" opacity=".8"/><rect x="47.0" y="22" width="3" height="3" fill="#aee8ae" opacity=".8"/><rect x="47.0" y="28" width="3" height="3" fill="#aee8ae" opacity=".8"/><rect x="47.0" y="39.500" width="2.500" height="2.500" fill="#aee8ae" opacity=".75"/><rect x="50.0" y="28" width="3" height="3" fill="#aee8ae" opacity=".8"/><rect x="50.0" y="22" width="3" height="3" fill="#aee8ae" opacity=".8"/><rect x="50.0" y="25" width="3" height="3" fill="#aee8ae" opacity=".8"/><rect x="50.0" y="39.500" width="2.500" height="2.500" fill="#aee8ae" opacity=".75"/><rect x="53.0" y="31" width="3" height="3" fill="#aee8ae" opacity=".8"/><rect x="53.0" y="25" width="2" height="3" fill="#aee8ae" opacity=".8"/><rect x="53.0" y="19" width="2" height="3" fill="#aee8ae" opacity=".8"/><rect x="53.0" y="39.500" width="2.500" height="2.500" fill="#aee8ae" opacity=".75"/><rect x="57.0" y="25" width="3" height="3" fill="#aee8ae" opacity=".8"/><rect x="57.0" y="34" width="2" height="3" fill="#aee8ae" opacity=".8"/><rect x="57.0" y="31" width="2" height="3" fill="#aee8ae" opacity=".8"/><rect x="60.0" y="25" width="3" height="3" fill="#aee8ae" opacity=".8"/><rect x="60.0" y="28" width="2" height="3" fill="#aee8ae" opacity=".8"/><rect x="60.0" y="34" width="3" height="3" fill="#aee8ae" opacity=".8"/><rect x="60.0" y="39.500" width="2.500" height="2.500" fill="#aee8ae" opacity=".75"/><rect x="64.0" y="25" width="2" height="3" fill="#aee8ae" opacity=".8"/><rect x="64.0" y="28" width="2" height="3" fill="#aee8ae" opacity=".8"/><rect x="64.0" y="19" width="3" height="3" fill="#aee8ae" opacity=".8"/><rect x="64.0" y="39.500" width="2.500" height="2.500" fill="#aee8ae" opacity=".75"/><rect x="68.0" y="25" width="3" height="3" fill="#aee8ae" opacity=".8"/><rect x="68.0" y="22" width="2" height="3" fill="#aee8ae" opacity=".8"/><rect x="68.0" y="39.500" width="2.500" height="2.500" fill="#aee8ae" opacity=".75"/><rect x="72.0" y="34" width="2" height="3" fill="#aee8ae" opacity=".8"/><rect x="72.0" y="22" width="2" height="3" fill="#aee8ae" opacity=".8"/><rect x="72.0" y="28" width="3" height="3" fill="#aee8ae" opacity=".8"/><rect x="72.0" y="39.500" width="2.500" height="2.500" fill="#aee8ae" opacity=".75"/><rect x="76.0" y="25" width="2" height="3" fill="#aee8ae" opacity=".8"/><rect x="76.0" y="22" width="2" height="3" fill="#aee8ae" opacity=".8"/><rect x="76.0" y="19" width="3" height="3" fill="#aee8ae" opacity=".8"/><rect x="80.0" y="25" width="2" height="3" fill="#aee8ae" opacity=".8"/><rect x="80.0" y="19" width="3" height="3" fill="#aee8ae" opacity=".8"/><rect x="80.0" y="34" width="3" height="3" fill="#aee8ae" opacity=".8"/><rect x="80.0" y="39.500" width="2.500" height="2.500" fill="#aee8ae" opacity=".75"/><rect x="84.0" y="25" width="3" height="3" fill="#aee8ae" opacity=".8"/><rect x="84.0" y="28" width="3" height="3" fill="#aee8ae" opacity=".8"/><rect x="84.0" y="34" width="2" height="3" fill="#aee8ae" opacity=".8"/><rect x="88.0" y="19" width="3" height="3" fill="#aee8ae" opacity=".8"/><rect x="88.0" y="28" width="2" height="3" fill="#aee8ae" opacity=".8"/><rect x="88.0" y="39.500" width="2.500" height="2.500" fill="#aee8ae" opacity=".75"/><rect x="93.0" y="31" width="2" height="3" fill="#aee8ae" opacity=".8"/><rect x="93.0" y="25" width="3" height="3" fill="#aee8ae" opacity=".8"/><rect x="93.0" y="22" width="2" height="3" fill="#aee8ae" opacity=".8"/><rect x="96.0" y="34" width="2" height="3" fill="#aee8ae" opacity=".8"/><rect x="96.0" y="31" width="3" height="3" fill="#aee8ae" opacity=".8"/><rect x="96.0" y="39.500" width="2.500" height="2.500" fill="#aee8ae" opacity=".75"/></svg><b>Chorus</b></div>
<div class="rg" style="left:321.6px;top:68px;width:101.2px;"><svg width="101" height="46" viewBox="0 0 101 46"><rect x="1.0" y="34" width="3" height="3" fill="#aee8ae" opacity=".8"/><rect x="1.0" y="19" width="2" height="3" fill="#aee8ae" opacity=".8"/><rect x="1.0" y="22" width="2" height="3" fill="#aee8ae" opacity=".8"/><rect x="1.0" y="39.500" width="2.500" height="2.500" fill="#aee8ae" opacity=".75"/><rect x="6.0" y="31" width="3" height="3" fill="#aee8ae" opacity=".8"/><rect x="6.0" y="19" width="2" height="3" fill="#aee8ae" opacity=".8"/><rect x="6.0" y="39.500" width="2.500" height="2.500" fill="#aee8ae" opacity=".75"/><rect x="11.0" y="25" width="2" height="3" fill="#aee8ae" opacity=".8"/><rect x="11.0" y="22" width="2" height="3" fill="#aee8ae" opacity=".8"/><rect x="11.0" y="39.500" width="2.500" height="2.500" fill="#aee8ae" opacity=".75"/><rect x="14.0" y="22" width="2" height="3" fill="#aee8ae" opacity=".8"/><rect x="14.0" y="25" width="2" height="3" fill="#aee8ae" opacity=".8"/><rect x="14.0" y="39.500" width="2.500" height="2.500" fill="#aee8ae" opacity=".75"/><rect x="19.0" y="25" width="3" height="3" fill="#aee8ae" opacity=".8"/><rect x="19.0" y="22" width="3" height="3" fill="#aee8ae" opacity=".8"/><rect x="19.0" y="39.500" width="2.500" height="2.500" fill="#aee8ae" opacity=".75"/><rect x="23.0" y="19" width="2" height="3" fill="#aee8ae" opacity=".8"/><rect x="23.0" y="22" width="2" height="3" fill="#aee8ae" opacity=".8"/><rect x="23.0" y="39.500" width="2.500" height="2.500" fill="#aee8ae" opacity=".75"/><rect x="28.0" y="34" width="3" height="3" fill="#aee8ae" opacity=".8"/><rect x="28.0" y="19" width="3" height="3" fill="#aee8ae" opacity=".8"/><rect x="28.0" y="39.500" width="2.500" height="2.500" fill="#aee8ae" opacity=".75"/><rect x="31.0" y="28" width="3" height="3" fill="#aee8ae" opacity=".8"/><rect x="31.0" y="34" width="3" height="3" fill="#aee8ae" opacity=".8"/><rect x="31.0" y="25" width="2" height="3" fill="#aee8ae" opacity=".8"/><rect x="36.0" y="22" width="2" height="3" fill="#aee8ae" opacity=".8"/><rect x="36.0" y="31" width="3" height="3" fill="#aee8ae" opacity=".8"/><rect x="40.0" y="25" width="3" height="3" fill="#aee8ae" opacity=".8"/><rect x="40.0" y="28" width="2" height="3" fill="#aee8ae" opacity=".8"/><rect x="40.0" y="39.500" width="2.500" height="2.500" fill="#aee8ae" opacity=".75"/><rect x="45.0" y="25" width="3" height="3" fill="#aee8ae" opacity=".8"/><rect x="45.0" y="28" width="3" height="3" fill="#aee8ae" opacity=".8"/><rect x="50.0" y="19" width="3" height="3" fill="#aee8ae" opacity=".8"/><rect x="50.0" y="22" width="2" height="3" fill="#aee8ae" opacity=".8"/><rect x="50.0" y="31" width="3" height="3" fill="#aee8ae" opacity=".8"/><rect x="50.0" y="39.500" width="2.500" height="2.500" fill="#aee8ae" opacity=".75"/><rect x="54.0" y="25" width="3" height="3" fill="#aee8ae" opacity=".8"/><rect x="54.0" y="34" width="2" height="3" fill="#aee8ae" opacity=".8"/><rect x="54.0" y="39.500" width="2.500" height="2.500" fill="#aee8ae" opacity=".75"/><rect x="57.0" y="34" width="2" height="3" fill="#aee8ae" opacity=".8"/><rect x="57.0" y="19" width="2" height="3" fill="#aee8ae" opacity=".8"/><rect x="57.0" y="25" width="3" height="3" fill="#aee8ae" opacity=".8"/><rect x="57.0" y="39.500" width="2.500" height="2.500" fill="#aee8ae" opacity=".75"/><rect x="62.0" y="31" width="2" height="3" fill="#aee8ae" opacity=".8"/><rect x="62.0" y="19" width="3" height="3" fill="#aee8ae" opacity=".8"/><rect x="62.0" y="39.500" width="2.500" height="2.500" fill="#aee8ae" opacity=".75"/><rect x="65.0" y="19" width="3" height="3" fill="#aee8ae" opacity=".8"/><rect x="65.0" y="34" width="3" height="3" fill="#aee8ae" opacity=".8"/><rect x="65.0" y="31" width="3" height="3" fill="#aee8ae" opacity=".8"/><rect x="68.0" y="19" width="2" height="3" fill="#aee8ae" opacity=".8"/><rect x="68.0" y="31" width="2" height="3" fill="#aee8ae" opacity=".8"/><rect x="68.0" y="39.500" width="2.500" height="2.500" fill="#aee8ae" opacity=".75"/><rect x="72.0" y="22" width="2" height="3" fill="#aee8ae" opacity=".8"/><rect x="72.0" y="34" width="3" height="3" fill="#aee8ae" opacity=".8"/><rect x="72.0" y="39.500" width="2.500" height="2.500" fill="#aee8ae" opacity=".75"/><rect x="77.0" y="25" width="3" height="3" fill="#aee8ae" opacity=".8"/><rect x="77.0" y="31" width="3" height="3" fill="#aee8ae" opacity=".8"/><rect x="77.0" y="28" width="2" height="3" fill="#aee8ae" opacity=".8"/><rect x="77.0" y="39.500" width="2.500" height="2.500" fill="#aee8ae" opacity=".75"/><rect x="81.0" y="34" width="3" height="3" fill="#aee8ae" opacity=".8"/><rect x="81.0" y="22" width="2" height="3" fill="#aee8ae" opacity=".8"/><rect x="81.0" y="28" width="3" height="3" fill="#aee8ae" opacity=".8"/><rect x="85.0" y="19" width="3" height="3" fill="#aee8ae" opacity=".8"/><rect x="85.0" y="28" width="3" height="3" fill="#aee8ae" opacity=".8"/><rect x="85.0" y="39.500" width="2.500" height="2.500" fill="#aee8ae" opacity=".75"/><rect x="89.0" y="25" width="2" height="3" fill="#aee8ae" opacity=".8"/><rect x="89.0" y="22" width="3" height="3" fill="#aee8ae" opacity=".8"/><rect x="93.0" y="31" width="2" height="3" fill="#aee8ae" opacity=".8"/><rect x="93.0" y="34" width="3" height="3" fill="#aee8ae" opacity=".8"/><rect x="93.0" y="25" width="2" height="3" fill="#aee8ae" opacity=".8"/><rect x="93.0" y="39.500" width="2.500" height="2.500" fill="#aee8ae" opacity=".75"/><rect x="98.0" y="22" width="3" height="3" fill="#aee8ae" opacity=".8"/><rect x="98.0" y="31" width="2" height="3" fill="#aee8ae" opacity=".8"/><rect x="98.0" y="39.500" width="2.500" height="2.500" fill="#aee8ae" opacity=".75"/></svg><b>Chorus</b></div>
<div class="rg" style="left:423.8px;top:117px;width:204.8px;"><svg width="205" height="46" viewBox="0 0 205 46"><rect x="19.0" y="20" width="3" height="8" fill="#aee8ae" opacity="1"/><rect x="24.0" y="21" width="2" height="6" fill="#aee8ae" opacity="0.8"/><rect x="16.0" y="34" width="9" height="2" fill="#aee8ae" opacity="0.7"/><rect x="44.6" y="20" width="3" height="8" fill="#aee8ae" opacity="1"/><rect x="49.6" y="21" width="2" height="6" fill="#aee8ae" opacity="0.8"/><rect x="41.6" y="34" width="9" height="2" fill="#aee8ae" opacity="0.7"/><rect x="70.2" y="20" width="3" height="8" fill="#aee8ae" opacity="1"/><rect x="75.2" y="21" width="2" height="6" fill="#aee8ae" opacity="0.8"/><rect x="67.2" y="34" width="9" height="2" fill="#aee8ae" opacity="0.7"/><rect x="95.8" y="20" width="3" height="8" fill="#aee8ae" opacity="1"/><rect x="100.8" y="21" width="2" height="6" fill="#aee8ae" opacity="0.8"/><rect x="92.8" y="34" width="9" height="2" fill="#aee8ae" opacity="0.7"/><rect x="121.4" y="20" width="3" height="8" fill="#aee8ae" opacity="0.45"/><rect x="126.4" y="21" width="2" height="6" fill="#aee8ae" opacity="0.36000000000000004"/><rect x="118.4" y="34" width="9" height="2" fill="#aee8ae" opacity="0.315"/><rect x="147.0" y="20" width="3" height="8" fill="#aee8ae" opacity="0.45"/><rect x="152.0" y="21" width="2" height="6" fill="#aee8ae" opacity="0.36000000000000004"/><rect x="144.0" y="34" width="9" height="2" fill="#aee8ae" opacity="0.315"/><rect x="172.6" y="20" width="3" height="8" fill="#aee8ae" opacity="0.45"/><rect x="177.6" y="21" width="2" height="6" fill="#aee8ae" opacity="0.36000000000000004"/><rect x="169.6" y="34" width="9" height="2" fill="#aee8ae" opacity="0.315"/><rect x="198.2" y="20" width="3" height="8" fill="#aee8ae" opacity="0.45"/><rect x="203.2" y="21" width="2" height="6" fill="#aee8ae" opacity="0.36000000000000004"/><rect x="195.2" y="34" width="9" height="2" fill="#aee8ae" opacity="0.315"/></svg><b>Classic Electric Piano &nbsp;&nbsp;&nbsp;+12</b></div>
<div class="rg" style="left:526.8px;top:166px;width:101.8px;"><svg width="102" height="46" viewBox="0 0 102 46"><rect x="2.0" y="23" width="4" height="5" fill="#d8f8d8"/><rect x="8.0" y="23" width="6" height="5" fill="#d8f8d8"/><rect x="15.0" y="23" width="4" height="5" fill="#d8f8d8"/><rect x="22.0" y="19" width="6" height="5" fill="#d8f8d8"/><rect x="30.0" y="19" width="6" height="5" fill="#d8f8d8"/><rect x="38.0" y="19" width="6" height="5" fill="#d8f8d8"/><rect x="46.0" y="19" width="3" height="5" fill="#d8f8d8"/><rect x="52.0" y="23" width="6" height="5" fill="#d8f8d8"/><rect x="59.0" y="21" width="3" height="5" fill="#d8f8d8"/><rect x="63.0" y="21" width="3" height="5" fill="#d8f8d8"/><rect x="67.0" y="23" width="3" height="5" fill="#d8f8d8"/><rect x="73.0" y="19" width="6" height="5" fill="#d8f8d8"/><rect x="81.0" y="19" width="3" height="5" fill="#d8f8d8"/><rect x="86.0" y="21" width="3" height="5" fill="#d8f8d8"/><rect x="90.0" y="19" width="6" height="5" fill="#d8f8d8"/><rect x="97.0" y="21" width="3" height="5" fill="#d8f8d8"/><rect x="3" y="32" width="71" height="2" fill="#aee8ae" opacity=".8"/><path d="M73.3 34 v6 h26.5" stroke="#aee8ae" stroke-width="1.5" fill="none" stroke-dasharray="3 2"/></svg><b>Classic Electric Pi</b></div>
<div class="rg" style="left:423.8px;top:215px;width:204.8px;"><svg width="205" height="46" viewBox="0 0 205 46"><rect x="19.0" y="20" width="3" height="8" fill="#aee8ae" opacity="1"/><rect x="24.0" y="21" width="2" height="6" fill="#aee8ae" opacity="0.8"/><rect x="16.0" y="34" width="9" height="2" fill="#aee8ae" opacity="0.7"/><rect x="44.6" y="20" width="3" height="8" fill="#aee8ae" opacity="1"/><rect x="49.6" y="21" width="2" height="6" fill="#aee8ae" opacity="0.8"/><rect x="41.6" y="34" width="9" height="2" fill="#aee8ae" opacity="0.7"/><rect x="70.2" y="20" width="3" height="8" fill="#aee8ae" opacity="1"/><rect x="75.2" y="21" width="2" height="6" fill="#aee8ae" opacity="0.8"/><rect x="67.2" y="34" width="9" height="2" fill="#aee8ae" opacity="0.7"/><rect x="95.8" y="20" width="3" height="8" fill="#aee8ae" opacity="1"/><rect x="100.8" y="21" width="2" height="6" fill="#aee8ae" opacity="0.8"/><rect x="92.8" y="34" width="9" height="2" fill="#aee8ae" opacity="0.7"/><rect x="121.4" y="20" width="3" height="8" fill="#aee8ae" opacity="0.45"/><rect x="126.4" y="21" width="2" height="6" fill="#aee8ae" opacity="0.36000000000000004"/><rect x="118.4" y="34" width="9" height="2" fill="#aee8ae" opacity="0.315"/><rect x="147.0" y="20" width="3" height="8" fill="#aee8ae" opacity="0.45"/><rect x="152.0" y="21" width="2" height="6" fill="#aee8ae" opacity="0.36000000000000004"/><rect x="144.0" y="34" width="9" height="2" fill="#aee8ae" opacity="0.315"/><rect x="172.6" y="20" width="3" height="8" fill="#aee8ae" opacity="0.45"/><rect x="177.6" y="21" width="2" height="6" fill="#aee8ae" opacity="0.36000000000000004"/><rect x="169.6" y="34" width="9" height="2" fill="#aee8ae" opacity="0.315"/><rect x="198.2" y="20" width="3" height="8" fill="#aee8ae" opacity="0.45"/><rect x="203.2" y="21" width="2" height="6" fill="#aee8ae" opacity="0.36000000000000004"/><rect x="195.2" y="34" width="9" height="2" fill="#aee8ae" opacity="0.315"/></svg><b>Classic Electric Piano &nbsp;&nbsp;&nbsp;+12</b></div>
<div class="rg" style="left:217.8px;top:313px;width:204.8px;"><svg width="205" height="46" viewBox="0 0 205 46"><path d="M3.0 31 q2 -7 8 -8 h6 l4 -3 l4 3 m4 3 h6 l4 -4 l4 4" stroke="#aee8ae" stroke-width="1.6" fill="none" opacity=".85"/><rect x="3.0" y="36" width="2" height="5" fill="#aee8ae" opacity=".6"/><path d="M54.2 31 q2 -7 8 -8 h6 l4 -3 l4 3 m4 3 h6 l4 -4 l4 4" stroke="#aee8ae" stroke-width="1.6" fill="none" opacity=".85"/><rect x="54.2" y="36" width="2" height="5" fill="#aee8ae" opacity=".6"/><path d="M105.4 31 q2 -7 8 -8 h6 l4 -3 l4 3 m4 3 h6 l4 -4 l4 4" stroke="#aee8ae" stroke-width="1.6" fill="none" opacity=".85"/><rect x="105.4" y="36" width="2" height="5" fill="#aee8ae" opacity=".6"/><path d="M156.6 31 q2 -7 8 -8 h6 l4 -3 l4 3 m4 3 h6 l4 -4 l4 4" stroke="#aee8ae" stroke-width="1.6" fill="none" opacity=".85"/><rect x="156.6" y="36" width="2" height="5" fill="#aee8ae" opacity=".6"/></svg><b>Soft Saw Lead</b></div>
<div class="rg" style="left:217.8px;top:362px;width:204.8px;"><svg width="205" height="46" viewBox="0 0 205 46"><path d="M3.0 31 q2 -7 8 -8 h6 l4 -3 l4 3 m4 3 h6 l4 -4 l4 4" stroke="#aee8ae" stroke-width="1.6" fill="none" opacity=".85"/><rect x="3.0" y="36" width="2" height="5" fill="#aee8ae" opacity=".6"/><path d="M54.2 31 q2 -7 8 -8 h6 l4 -3 l4 3 m4 3 h6 l4 -4 l4 4" stroke="#aee8ae" stroke-width="1.6" fill="none" opacity=".85"/><rect x="54.2" y="36" width="2" height="5" fill="#aee8ae" opacity=".6"/><path d="M105.4 31 q2 -7 8 -8 h6 l4 -3 l4 3 m4 3 h6 l4 -4 l4 4" stroke="#aee8ae" stroke-width="1.6" fill="none" opacity=".85"/><rect x="105.4" y="36" width="2" height="5" fill="#aee8ae" opacity=".6"/><path d="M156.6 31 q2 -7 8 -8 h6 l4 -3 l4 3 m4 3 h6 l4 -4 l4 4" stroke="#aee8ae" stroke-width="1.6" fill="none" opacity=".85"/><rect x="156.6" y="36" width="2" height="5" fill="#aee8ae" opacity=".6"/></svg><b>Soft Saw Lead</b></div>
<div class="rg" style="left:217.8px;top:411px;width:100.8px;"><svg width="101" height="46" viewBox="0 0 101 46"><rect x="2.0" y="32" width="3" height="3" fill="#aee8ae" opacity=".85"/><rect x="9.0" y="32" width="10" height="3" fill="#aee8ae" opacity=".85"/><rect x="25.0" y="32" width="8" height="3" fill="#aee8ae" opacity=".85"/><rect x="35.0" y="32" width="3" height="3" fill="#aee8ae" opacity=".85"/><rect x="42.0" y="32" width="8" height="3" fill="#aee8ae" opacity=".85"/><rect x="54.0" y="32" width="10" height="3" fill="#aee8ae" opacity=".85"/><rect x="68.0" y="32" width="3" height="3" fill="#aee8ae" opacity=".85"/><rect x="73.0" y="32" width="10" height="3" fill="#aee8ae" opacity=".85"/><rect x="87.0" y="32" width="5" height="3" fill="#aee8ae" opacity=".85"/></svg><b>Classic Electric Pi</b></div>
<div class="rg" style="left:321.6px;top:411px;width:101.2px;"><svg width="101" height="46" viewBox="0 0 101 46"><rect x="2.0" y="32" width="8" height="3" fill="#aee8ae" opacity=".85"/><rect x="12.0" y="32" width="8" height="3" fill="#aee8ae" opacity=".85"/><rect x="22.0" y="32" width="10" height="3" fill="#aee8ae" opacity=".85"/><rect x="34.0" y="32" width="10" height="3" fill="#aee8ae" opacity=".85"/><rect x="50.0" y="32" width="8" height="3" fill="#aee8ae" opacity=".85"/><rect x="60.0" y="32" width="8" height="3" fill="#aee8ae" opacity=".85"/><rect x="74.0" y="32" width="8" height="3" fill="#aee8ae" opacity=".85"/><rect x="86.0" y="32" width="8" height="3" fill="#aee8ae" opacity=".85"/></svg><b>Classic Electric Pi</b></div>
<div class="rg" style="left:217.8px;top:460px;width:100.8px;"><svg width="101" height="46" viewBox="0 0 101 46"><rect x="2.0" y="32" width="8" height="3" fill="#aee8ae" opacity=".85"/><rect x="12.0" y="32" width="8" height="3" fill="#aee8ae" opacity=".85"/><rect x="26.0" y="32" width="3" height="3" fill="#aee8ae" opacity=".85"/><rect x="35.0" y="32" width="10" height="3" fill="#aee8ae" opacity=".85"/><rect x="51.0" y="32" width="8" height="3" fill="#aee8ae" opacity=".85"/><rect x="61.0" y="32" width="8" height="3" fill="#aee8ae" opacity=".85"/><rect x="75.0" y="32" width="5" height="3" fill="#aee8ae" opacity=".85"/><rect x="86.0" y="32" width="5" height="3" fill="#aee8ae" opacity=".85"/><rect x="93.0" y="32" width="8" height="3" fill="#aee8ae" opacity=".85"/></svg><b>Classic Electric Pi</b></div>
<div class="rg" style="left:321.6px;top:460px;width:101.2px;"><svg width="101" height="46" viewBox="0 0 101 46"><rect x="2.0" y="32" width="10" height="3" fill="#aee8ae" opacity=".85"/><rect x="14.0" y="32" width="3" height="3" fill="#aee8ae" opacity=".85"/><rect x="23.0" y="32" width="5" height="3" fill="#aee8ae" opacity=".85"/><rect x="32.0" y="32" width="10" height="3" fill="#aee8ae" opacity=".85"/><rect x="48.0" y="32" width="8" height="3" fill="#aee8ae" opacity=".85"/><rect x="62.0" y="32" width="5" height="3" fill="#aee8ae" opacity=".85"/><rect x="71.0" y="32" width="10" height="3" fill="#aee8ae" opacity=".85"/><rect x="85.0" y="32" width="5" height="3" fill="#aee8ae" opacity=".85"/><rect x="96.0" y="32" width="3" height="3" fill="#aee8ae" opacity=".85"/></svg><b>Classic Electric Pi</b></div>
<div class="rg" style="left:217.8px;top:509px;width:100.8px;"><svg width="101" height="46" viewBox="0 0 101 46"><rect x="2.0" y="22" width="5" height="5" fill="#aee8ae"/><rect x="2.0" y="33" width="5" height="2.500" fill="#aee8ae" opacity=".8"/><rect x="12.0" y="22" width="10" height="5" fill="#aee8ae"/><rect x="12.0" y="33" width="10" height="2.500" fill="#aee8ae" opacity=".8"/><rect x="25.0" y="22" width="3" height="5" fill="#aee8ae"/><rect x="25.0" y="33" width="3" height="2.500" fill="#aee8ae" opacity=".8"/><rect x="31.0" y="22" width="8" height="5" fill="#aee8ae"/><rect x="31.0" y="33" width="8" height="2.500" fill="#aee8ae" opacity=".8"/><rect x="42.0" y="22" width="3" height="5" fill="#aee8ae"/><rect x="42.0" y="33" width="3" height="2.500" fill="#aee8ae" opacity=".8"/><rect x="47.0" y="22" width="3" height="5" fill="#aee8ae"/><rect x="47.0" y="33" width="3" height="2.500" fill="#aee8ae" opacity=".8"/><rect x="53.0" y="22" width="8" height="5" fill="#aee8ae"/><rect x="53.0" y="33" width="8" height="2.500" fill="#aee8ae" opacity=".8"/><rect x="63.0" y="22" width="8" height="5" fill="#aee8ae"/><rect x="63.0" y="33" width="8" height="2.500" fill="#aee8ae" opacity=".8"/><rect x="74.0" y="22" width="10" height="5" fill="#aee8ae"/><rect x="74.0" y="33" width="10" height="2.500" fill="#aee8ae" opacity=".8"/><rect x="87.0" y="22" width="3" height="5" fill="#aee8ae"/><rect x="87.0" y="33" width="3" height="2.500" fill="#aee8ae" opacity=".8"/><rect x="93.0" y="22" width="10" height="5" fill="#aee8ae"/><rect x="93.0" y="33" width="10" height="2.500" fill="#aee8ae" opacity=".8"/><path d="M72.6 36 v5 h26.2" stroke="#aee8ae" stroke-width="1.5" fill="none" stroke-dasharray="3 2"/></svg><b>Classic Electric Pi</b></div>
<div class="rg" style="left:321.6px;top:509px;width:101.2px;"><svg width="101" height="46" viewBox="0 0 101 46"><rect x="2.0" y="22" width="5" height="5" fill="#aee8ae"/><rect x="2.0" y="33" width="5" height="2.500" fill="#aee8ae" opacity=".8"/><rect x="10.0" y="22" width="3" height="5" fill="#aee8ae"/><rect x="10.0" y="33" width="3" height="2.500" fill="#aee8ae" opacity=".8"/><rect x="18.0" y="22" width="3" height="5" fill="#aee8ae"/><rect x="18.0" y="33" width="3" height="2.500" fill="#aee8ae" opacity=".8"/><rect x="26.0" y="22" width="3" height="5" fill="#aee8ae"/><rect x="26.0" y="33" width="3" height="2.500" fill="#aee8ae" opacity=".8"/><rect x="31.0" y="22" width="5" height="5" fill="#aee8ae"/><rect x="31.0" y="33" width="5" height="2.500" fill="#aee8ae" opacity=".8"/><rect x="41.0" y="22" width="10" height="5" fill="#aee8ae"/><rect x="41.0" y="33" width="10" height="2.500" fill="#aee8ae" opacity=".8"/><rect x="56.0" y="22" width="10" height="5" fill="#aee8ae"/><rect x="56.0" y="33" width="10" height="2.500" fill="#aee8ae" opacity=".8"/><rect x="71.0" y="22" width="5" height="5" fill="#aee8ae"/><rect x="71.0" y="33" width="5" height="2.500" fill="#aee8ae" opacity=".8"/><rect x="81.0" y="22" width="5" height="5" fill="#aee8ae"/><rect x="81.0" y="33" width="5" height="2.500" fill="#aee8ae" opacity=".8"/><rect x="89.0" y="22" width="5" height="5" fill="#aee8ae"/><rect x="89.0" y="33" width="5" height="2.500" fill="#aee8ae" opacity=".8"/><path d="M72.9 36 v5 h26.3" stroke="#aee8ae" stroke-width="1.5" fill="none" stroke-dasharray="3 2"/></svg><b>Classic Electric Pi</b></div>
<div class="rg" style="left:217.8px;top:558px;width:100.8px;"><svg width="101" height="46" viewBox="0 0 101 46"><rect x="2.0" y="22" width="5" height="5" fill="#aee8ae"/><rect x="2.0" y="33" width="5" height="2.500" fill="#aee8ae" opacity=".8"/><rect x="12.0" y="22" width="5" height="5" fill="#aee8ae"/><rect x="12.0" y="33" width="5" height="2.500" fill="#aee8ae" opacity=".8"/><rect x="19.0" y="22" width="8" height="5" fill="#aee8ae"/><rect x="19.0" y="33" width="8" height="2.500" fill="#aee8ae" opacity=".8"/><rect x="30.0" y="22" width="8" height="5" fill="#aee8ae"/><rect x="30.0" y="33" width="8" height="2.500" fill="#aee8ae" opacity=".8"/><rect x="40.0" y="22" width="10" height="5" fill="#aee8ae"/><rect x="40.0" y="33" width="10" height="2.500" fill="#aee8ae" opacity=".8"/><rect x="53.0" y="22" width="10" height="5" fill="#aee8ae"/><rect x="53.0" y="33" width="10" height="2.500" fill="#aee8ae" opacity=".8"/><rect x="66.0" y="22" width="8" height="5" fill="#aee8ae"/><rect x="66.0" y="33" width="8" height="2.500" fill="#aee8ae" opacity=".8"/><rect x="79.0" y="22" width="10" height="5" fill="#aee8ae"/><rect x="79.0" y="33" width="10" height="2.500" fill="#aee8ae" opacity=".8"/><rect x="94.0" y="22" width="8" height="5" fill="#aee8ae"/><rect x="94.0" y="33" width="8" height="2.500" fill="#aee8ae" opacity=".8"/><path d="M72.6 36 v5 h26.2" stroke="#aee8ae" stroke-width="1.5" fill="none" stroke-dasharray="3 2"/></svg><b>Classic Electric Pi</b></div>
<div class="rg" style="left:321.6px;top:558px;width:101.2px;"><svg width="101" height="46" viewBox="0 0 101 46"><rect x="2.0" y="22" width="10" height="5" fill="#aee8ae"/><rect x="2.0" y="33" width="10" height="2.500" fill="#aee8ae" opacity=".8"/><rect x="14.0" y="22" width="5" height="5" fill="#aee8ae"/><rect x="14.0" y="33" width="5" height="2.500" fill="#aee8ae" opacity=".8"/><rect x="24.0" y="22" width="3" height="5" fill="#aee8ae"/><rect x="24.0" y="33" width="3" height="2.500" fill="#aee8ae" opacity=".8"/><rect x="29.0" y="22" width="5" height="5" fill="#aee8ae"/><rect x="29.0" y="33" width="5" height="2.500" fill="#aee8ae" opacity=".8"/><rect x="37.0" y="22" width="5" height="5" fill="#aee8ae"/><rect x="37.0" y="33" width="5" height="2.500" fill="#aee8ae" opacity=".8"/><rect x="47.0" y="22" width="10" height="5" fill="#aee8ae"/><rect x="47.0" y="33" width="10" height="2.500" fill="#aee8ae" opacity=".8"/><rect x="59.0" y="22" width="5" height="5" fill="#aee8ae"/><rect x="59.0" y="33" width="5" height="2.500" fill="#aee8ae" opacity=".8"/><rect x="69.0" y="22" width="5" height="5" fill="#aee8ae"/><rect x="69.0" y="33" width="5" height="2.500" fill="#aee8ae" opacity=".8"/><rect x="76.0" y="22" width="10" height="5" fill="#aee8ae"/><rect x="76.0" y="33" width="10" height="2.500" fill="#aee8ae" opacity=".8"/><rect x="88.0" y="22" width="8" height="5" fill="#aee8ae"/><rect x="88.0" y="33" width="8" height="2.500" fill="#aee8ae" opacity=".8"/><path d="M72.9 36 v5 h26.3" stroke="#aee8ae" stroke-width="1.5" fill="none" stroke-dasharray="3 2"/></svg><b>Classic Electric Pi</b></div>
<div class="rg" style="left:217.8px;top:607px;width:100.8px;"><svg width="101" height="46" viewBox="0 0 101 46"><rect x="2.0" y="22" width="5" height="5" fill="#aee8ae"/><rect x="2.0" y="33" width="5" height="2.500" fill="#aee8ae" opacity=".8"/><rect x="9.0" y="22" width="10" height="5" fill="#aee8ae"/><rect x="9.0" y="33" width="10" height="2.500" fill="#aee8ae" opacity=".8"/><rect x="21.0" y="22" width="3" height="5" fill="#aee8ae"/><rect x="21.0" y="33" width="3" height="2.500" fill="#aee8ae" opacity=".8"/><rect x="26.0" y="22" width="8" height="5" fill="#aee8ae"/><rect x="26.0" y="33" width="8" height="2.500" fill="#aee8ae" opacity=".8"/><rect x="39.0" y="22" width="5" height="5" fill="#aee8ae"/><rect x="39.0" y="33" width="5" height="2.500" fill="#aee8ae" opacity=".8"/><rect x="49.0" y="22" width="3" height="5" fill="#aee8ae"/><rect x="49.0" y="33" width="3" height="2.500" fill="#aee8ae" opacity=".8"/><rect x="55.0" y="22" width="3" height="5" fill="#aee8ae"/><rect x="55.0" y="33" width="3" height="2.500" fill="#aee8ae" opacity=".8"/><rect x="61.0" y="22" width="8" height="5" fill="#aee8ae"/><rect x="61.0" y="33" width="8" height="2.500" fill="#aee8ae" opacity=".8"/><rect x="72.0" y="22" width="8" height="5" fill="#aee8ae"/><rect x="72.0" y="33" width="8" height="2.500" fill="#aee8ae" opacity=".8"/><rect x="85.0" y="22" width="5" height="5" fill="#aee8ae"/><rect x="85.0" y="33" width="5" height="2.500" fill="#aee8ae" opacity=".8"/><rect x="92.0" y="22" width="3" height="5" fill="#aee8ae"/><rect x="92.0" y="33" width="3" height="2.500" fill="#aee8ae" opacity=".8"/><path d="M72.6 36 v5 h26.2" stroke="#aee8ae" stroke-width="1.5" fill="none" stroke-dasharray="3 2"/></svg><b>Classic Electric Pi</b></div>
<div class="rg" style="left:321.6px;top:607px;width:101.2px;"><svg width="101" height="46" viewBox="0 0 101 46"><rect x="2.0" y="22" width="3" height="5" fill="#aee8ae"/><rect x="2.0" y="33" width="3" height="2.500" fill="#aee8ae" opacity=".8"/><rect x="10.0" y="22" width="8" height="5" fill="#aee8ae"/><rect x="10.0" y="33" width="8" height="2.500" fill="#aee8ae" opacity=".8"/><rect x="20.0" y="22" width="3" height="5" fill="#aee8ae"/><rect x="20.0" y="33" width="3" height="2.500" fill="#aee8ae" opacity=".8"/><rect x="25.0" y="22" width="10" height="5" fill="#aee8ae"/><rect x="25.0" y="33" width="10" height="2.500" fill="#aee8ae" opacity=".8"/><rect x="40.0" y="22" width="5" height="5" fill="#aee8ae"/><rect x="40.0" y="33" width="5" height="2.500" fill="#aee8ae" opacity=".8"/><rect x="48.0" y="22" width="8" height="5" fill="#aee8ae"/><rect x="48.0" y="33" width="8" height="2.500" fill="#aee8ae" opacity=".8"/><rect x="58.0" y="22" width="3" height="5" fill="#aee8ae"/><rect x="58.0" y="33" width="3" height="2.500" fill="#aee8ae" opacity=".8"/><rect x="64.0" y="22" width="3" height="5" fill="#aee8ae"/><rect x="64.0" y="33" width="3" height="2.500" fill="#aee8ae" opacity=".8"/><rect x="69.0" y="22" width="5" height="5" fill="#aee8ae"/><rect x="69.0" y="33" width="5" height="2.500" fill="#aee8ae" opacity=".8"/><rect x="77.0" y="22" width="10" height="5" fill="#aee8ae"/><rect x="77.0" y="33" width="10" height="2.500" fill="#aee8ae" opacity=".8"/><rect x="90.0" y="22" width="3" height="5" fill="#aee8ae"/><rect x="90.0" y="33" width="3" height="2.500" fill="#aee8ae" opacity=".8"/><rect x="98.0" y="22" width="10" height="5" fill="#aee8ae"/><rect x="98.0" y="33" width="10" height="2.500" fill="#aee8ae" opacity=".8"/><path d="M72.9 36 v5 h26.3" stroke="#aee8ae" stroke-width="1.5" fill="none" stroke-dasharray="3 2"/></svg><b>Classic Electric Pi</b></div>
<div class="rg" style="left:11.8px;top:509px;width:203.3px;"><svg width="203" height="46" viewBox="0 0 203 46"><rect x="2.0" y="22" width="10" height="5" fill="#aee8ae"/><rect x="2.0" y="33" width="10" height="2.500" fill="#aee8ae" opacity=".8"/><rect x="15.0" y="22" width="3" height="5" fill="#aee8ae"/><rect x="15.0" y="33" width="3" height="2.500" fill="#aee8ae" opacity=".8"/><rect x="21.0" y="22" width="10" height="5" fill="#aee8ae"/><rect x="21.0" y="33" width="10" height="2.500" fill="#aee8ae" opacity=".8"/><rect x="36.0" y="22" width="10" height="5" fill="#aee8ae"/><rect x="36.0" y="33" width="10" height="2.500" fill="#aee8ae" opacity=".8"/><rect x="49.0" y="22" width="5" height="5" fill="#aee8ae"/><rect x="49.0" y="33" width="5" height="2.500" fill="#aee8ae" opacity=".8"/><rect x="57.0" y="22" width="3" height="5" fill="#aee8ae"/><rect x="57.0" y="33" width="3" height="2.500" fill="#aee8ae" opacity=".8"/><rect x="65.0" y="22" width="8" height="5" fill="#aee8ae"/><rect x="65.0" y="33" width="8" height="2.500" fill="#aee8ae" opacity=".8"/><rect x="76.0" y="22" width="8" height="5" fill="#aee8ae"/><rect x="76.0" y="33" width="8" height="2.500" fill="#aee8ae" opacity=".8"/><rect x="87.0" y="22" width="8" height="5" fill="#aee8ae"/><rect x="87.0" y="33" width="8" height="2.500" fill="#aee8ae" opacity=".8"/><rect x="100.0" y="22" width="10" height="5" fill="#aee8ae"/><rect x="100.0" y="33" width="10" height="2.500" fill="#aee8ae" opacity=".8"/><rect x="112.0" y="22" width="3" height="5" fill="#aee8ae"/><rect x="112.0" y="33" width="3" height="2.500" fill="#aee8ae" opacity=".8"/><rect x="117.0" y="22" width="8" height="5" fill="#aee8ae"/><rect x="117.0" y="33" width="8" height="2.500" fill="#aee8ae" opacity=".8"/><rect x="128.0" y="22" width="5" height="5" fill="#aee8ae"/><rect x="128.0" y="33" width="5" height="2.500" fill="#aee8ae" opacity=".8"/><rect x="136.0" y="22" width="5" height="5" fill="#aee8ae"/><rect x="136.0" y="33" width="5" height="2.500" fill="#aee8ae" opacity=".8"/><rect x="143.0" y="22" width="5" height="5" fill="#aee8ae"/><rect x="143.0" y="33" width="5" height="2.500" fill="#aee8ae" opacity=".8"/><rect x="150.0" y="22" width="5" height="5" fill="#aee8ae"/><rect x="150.0" y="33" width="5" height="2.500" fill="#aee8ae" opacity=".8"/><rect x="160.0" y="22" width="10" height="5" fill="#aee8ae"/><rect x="160.0" y="33" width="10" height="2.500" fill="#aee8ae" opacity=".8"/><rect x="175.0" y="22" width="5" height="5" fill="#aee8ae"/><rect x="175.0" y="33" width="5" height="2.500" fill="#aee8ae" opacity=".8"/><rect x="185.0" y="22" width="3" height="5" fill="#aee8ae"/><rect x="185.0" y="33" width="3" height="2.500" fill="#aee8ae" opacity=".8"/><rect x="190.0" y="22" width="3" height="5" fill="#aee8ae"/><rect x="190.0" y="33" width="3" height="2.500" fill="#aee8ae" opacity=".8"/><rect x="198.0" y="22" width="5" height="5" fill="#aee8ae"/><rect x="198.0" y="33" width="5" height="2.500" fill="#aee8ae" opacity=".8"/><path d="M146.4 36 v5 h52.9" stroke="#aee8ae" stroke-width="1.5" fill="none" stroke-dasharray="3 2"/></svg><i style="position:absolute;left:50%;top:0;right:0;bottom:0;background:rgba(30,136,40,.6);border-left:1px solid rgba(20,100,30,.6)"></i><b>Classic Electric Piano</b></div>
<div class="rg" style="left:114.8px;top:656px;width:24.6px;"><svg width="25" height="46" viewBox="0 0 25 46"><rect x="0" y="22" width="25" height="5" fill="#7cd87c" opacity=".9"/><rect x="0" y="30" width="25" height="5" fill="#7cd87c" opacity=".9"/><rect x="0" y="38" width="25" height="5" fill="#7cd87c" opacity=".9"/></svg><b>Cla</b></div>
<div class="rg" style="left:140.6px;top:705px;width:24.6px;"><svg width="25" height="46" viewBox="0 0 25 46"><rect x="0" y="22" width="25" height="5" fill="#7cd87c" opacity=".9"/><rect x="0" y="30" width="25" height="5" fill="#7cd87c" opacity=".9"/><rect x="0" y="38" width="25" height="5" fill="#7cd87c" opacity=".9"/></svg><b>Cla</b></div>
<div class="au" style="left:423.8px;top:264px;width:210.0px"><svg width="208" height="46" viewBox="0 0 208 46" style="position:absolute;left:0;top:0"><rect x="1" y="0" width="3" height="46" fill="#9a5a10"/><rect x="1" y="28.5" width="3" height="8" fill="#f4dca0"/><rect x="5" y="0" width="3" height="46" fill="#a86214"/><rect x="5" y="24.5" width="3" height="16" fill="#f4dca0"/><rect x="10" y="0" width="2" height="46" fill="#c8802a"/><rect x="10" y="26.5" width="2" height="12" fill="#f4dca0"/><rect x="14" y="0" width="2" height="46" fill="#a86214"/><rect x="14" y="22.5" width="2" height="20" fill="#f4dca0"/><rect x="17" y="0" width="2" height="46" fill="#9a5a10"/><rect x="17" y="28.5" width="2" height="8" fill="#f4dca0"/><rect x="21" y="0" width="3" height="46" fill="#9a5a10"/><rect x="21" y="26.5" width="3" height="12" fill="#f4dca0"/><rect x="26" y="0" width="4" height="46" fill="#c8802a"/><rect x="26" y="24.5" width="4" height="16" fill="#f4dca0"/><rect x="31" y="0" width="4" height="46" fill="#c8802a"/><rect x="31" y="19.5" width="4" height="26" fill="#f4dca0"/><rect x="37" y="0" width="3" height="46" fill="#a86214"/><rect x="37" y="24.5" width="3" height="16" fill="#f4dca0"/><rect x="42" y="0" width="2" height="46" fill="#d89038"/><rect x="42" y="28.5" width="2" height="8" fill="#f4dca0"/><rect x="46" y="0" width="4" height="46" fill="#d89038"/><rect x="46" y="24.5" width="4" height="16" fill="#f4dca0"/><rect x="51" y="0" width="2" height="46" fill="#a86214"/><rect x="51" y="28.5" width="2" height="8" fill="#f4dca0"/><rect x="56" y="0" width="4" height="46" fill="#c8802a"/><rect x="56" y="28.5" width="4" height="8" fill="#f4dca0"/><rect x="61" y="0" width="4" height="46" fill="#c8802a"/><rect x="61" y="28.5" width="4" height="8" fill="#f4dca0"/><rect x="66" y="0" width="4" height="46" fill="#c8802a"/><rect x="66" y="22.5" width="4" height="20" fill="#f4dca0"/><rect x="71" y="0" width="2" height="46" fill="#d89038"/><rect x="71" y="26.5" width="2" height="12" fill="#f4dca0"/><rect x="75" y="0" width="3" height="46" fill="#a86214"/><rect x="75" y="24.5" width="3" height="16" fill="#f4dca0"/><rect x="81" y="0" width="2" height="46" fill="#a86214"/><rect x="81" y="24.5" width="2" height="16" fill="#f4dca0"/><rect x="86" y="0" width="4" height="46" fill="#a86214"/><rect x="86" y="28.5" width="4" height="8" fill="#f4dca0"/><rect x="92" y="0" width="2" height="46" fill="#a86214"/><rect x="92" y="28.5" width="2" height="8" fill="#f4dca0"/><rect x="97" y="0" width="3" height="46" fill="#d89038"/><rect x="97" y="20.5" width="3" height="24" fill="#f4dca0"/><rect x="103" y="0" width="3" height="46" fill="#9a5a10"/><rect x="103" y="19.5" width="3" height="26" fill="#f4dca0"/><rect x="109" y="0" width="3" height="46" fill="#d89038"/><rect x="109" y="26.5" width="3" height="12" fill="#f4dca0"/><rect x="114" y="0" width="3" height="46" fill="#a86214"/><rect x="114" y="26.5" width="3" height="12" fill="#f4dca0"/><rect x="119" y="0" width="4" height="46" fill="#a86214"/><rect x="119" y="24.5" width="4" height="16" fill="#f4dca0"/><rect x="125" y="0" width="2" height="46" fill="#a86214"/><rect x="125" y="22.5" width="2" height="20" fill="#f4dca0"/><rect x="128" y="0" width="2" height="46" fill="#9a5a10"/><rect x="128" y="19.5" width="2" height="26" fill="#f4dca0"/><rect x="131" y="0" width="3" height="46" fill="#c8802a"/><rect x="131" y="19.5" width="3" height="26" fill="#f4dca0"/><rect x="137" y="0" width="4" height="46" fill="#c8802a"/><rect x="137" y="24.5" width="4" height="16" fill="#f4dca0"/><rect x="142" y="0" width="4" height="46" fill="#c8802a"/><rect x="142" y="20.5" width="4" height="24" fill="#f4dca0"/><rect x="147" y="0" width="3" height="46" fill="#a86214"/><rect x="147" y="19.5" width="3" height="26" fill="#f4dca0"/><rect x="153" y="0" width="3" height="46" fill="#d89038"/><rect x="153" y="28.5" width="3" height="8" fill="#f4dca0"/><rect x="157" y="0" width="2" height="46" fill="#a86214"/><rect x="157" y="28.5" width="2" height="8" fill="#f4dca0"/><rect x="161" y="0" width="4" height="46" fill="#d89038"/><rect x="161" y="28.5" width="4" height="8" fill="#f4dca0"/><rect x="167" y="0" width="2" height="46" fill="#9a5a10"/><rect x="167" y="26.5" width="2" height="12" fill="#f4dca0"/><rect x="172" y="0" width="2" height="46" fill="#9a5a10"/><rect x="172" y="19.5" width="2" height="26" fill="#f4dca0"/><rect x="175" y="0" width="4" height="46" fill="#c8802a"/><rect x="175" y="28.5" width="4" height="8" fill="#f4dca0"/><rect x="180" y="0" width="3" height="46" fill="#9a5a10"/><rect x="180" y="26.5" width="3" height="12" fill="#f4dca0"/><rect x="186" y="0" width="4" height="46" fill="#a86214"/><rect x="186" y="20.5" width="4" height="24" fill="#f4dca0"/><rect x="193" y="0" width="3" height="46" fill="#9a5a10"/><rect x="193" y="22.5" width="3" height="20" fill="#f4dca0"/><rect x="197" y="0" width="4" height="46" fill="#c8802a"/><rect x="197" y="28.5" width="4" height="8" fill="#f4dca0"/><rect x="202" y="0" width="4" height="46" fill="#c8802a"/><rect x="202" y="28.5" width="4" height="8" fill="#f4dca0"/><rect x="207" y="0" width="3" height="46" fill="#c8802a"/><rect x="207" y="28.5" width="3" height="8" fill="#f4dca0"/><rect x="0" y="29" width="208" height="6" fill="#f4dca0" opacity=".7"/></svg></div><div class="abs" style="left:632.0px;top:30px;width:1.6px;height:720px;background:#a4a4a4"></div><svg class="abs" style="left:626.0px;top:22px" width="14" height="12" viewBox="0 0 14 12"><path d="M1 1h12v4l-6 6l-6-6z" fill="#b4b4b4" stroke="#777"/></svg>
</div>
<div class="abs" style="left:1247px;top:822px;width:200px;height:30px;opacity:.55"><svg class="abs" style="left:0;top:1px" width="36" height="26" viewBox="0 0 36 26"><rect x="1" y="1" width="34" height="24" rx="2" fill="#9a9a9a"/><path d="M8 17l10-8h10l-4 4h-6l8 0l-4 5H8z" fill="#2a2a2a"/></svg><span class="abs" style="left:39px;top:0px;font-size:25px;color:#b8b8b8;letter-spacing:-.6px;white-space:nowrap">mac<b>Pro</b><i style="color:#8a8a8a">Video</i></span></div><svg class="abs" style="left:902px;top:523px" width="14" height="20" viewBox="0 0 14 20"><path d="M2 1v14l3.500-3l2.500 6l2-1l-2.500-5.500h4.500z" fill="#111" stroke="#ddd" stroke-width="1.200"/></svg>
</div></div></body></html>
